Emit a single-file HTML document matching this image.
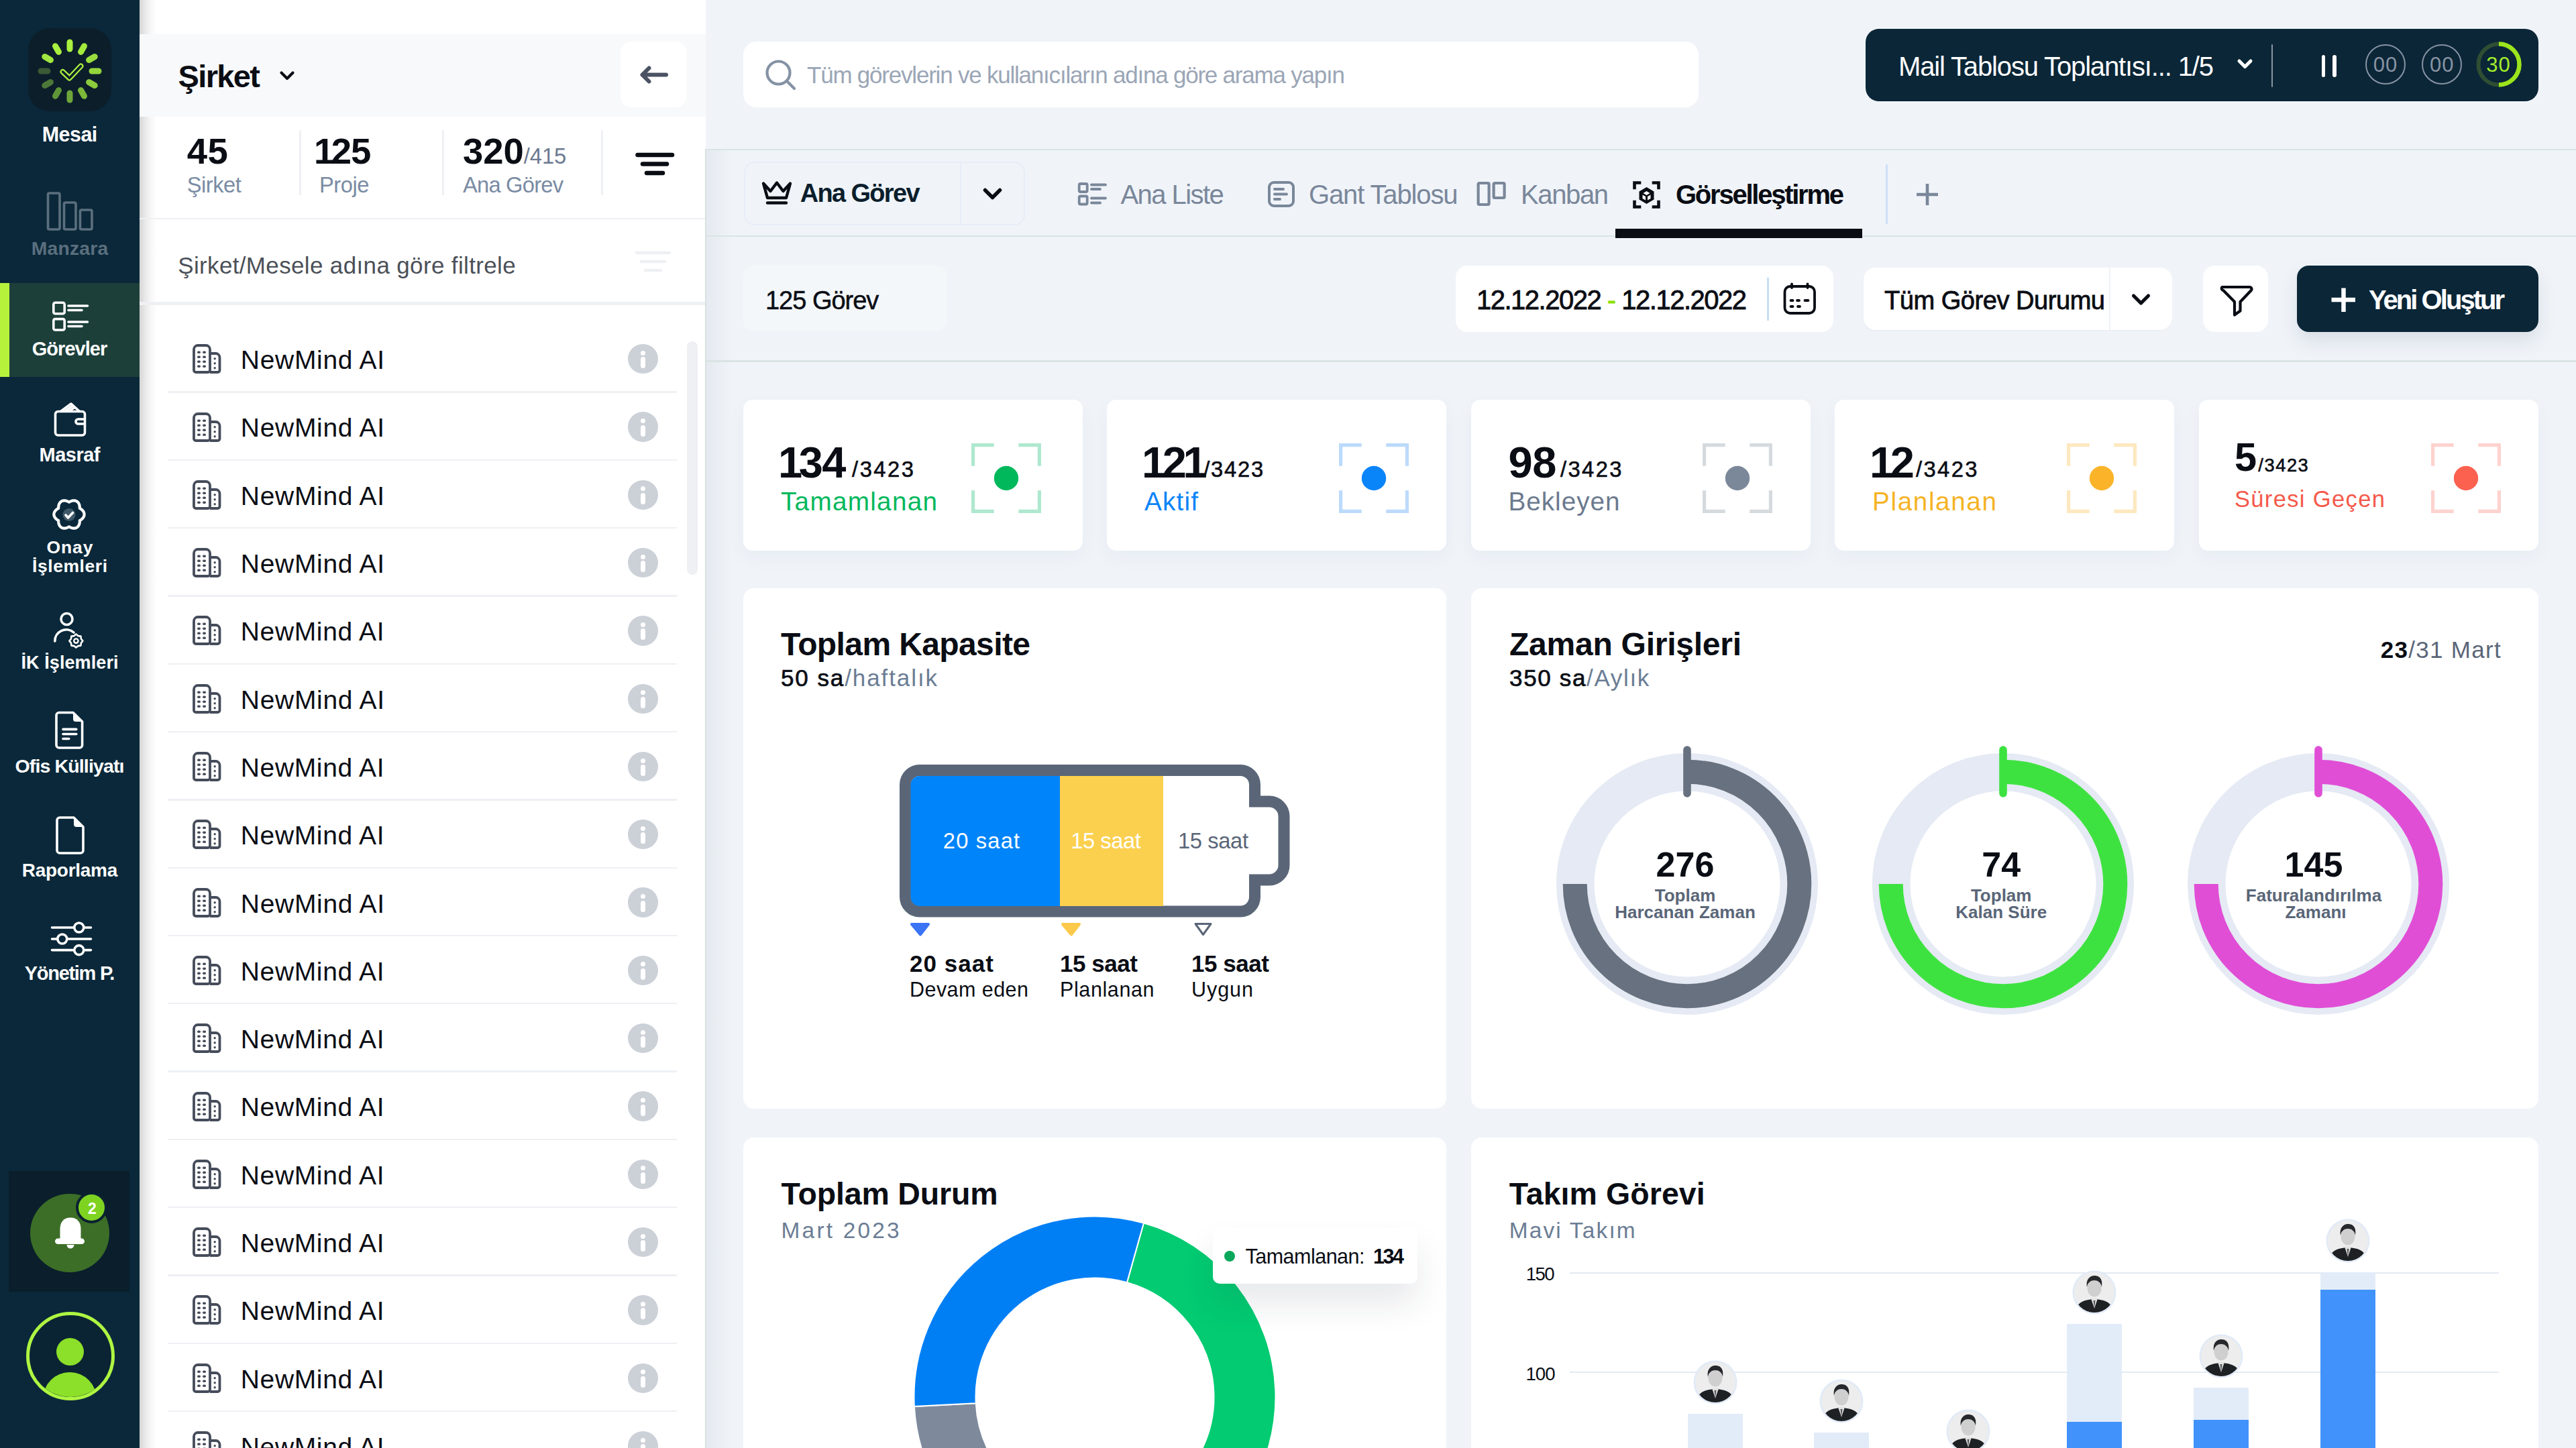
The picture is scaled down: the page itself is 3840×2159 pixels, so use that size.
<!DOCTYPE html><html><head><meta charset="utf-8"><title>Dashboard</title><style>html,body{margin:0;padding:0;}body{width:3840px;height:2159px;overflow:hidden;position:relative;background:#f0f4f9;font-family:"Liberation Sans",sans-serif;}.a{position:absolute;}.t{position:absolute;line-height:1;white-space:nowrap;}</style></head><body><div class="a" style="left:0.00px;top:0.00px;width:208.00px;height:2159.00px;background:#0a283a;border-radius:0px;"></div>
<div class="a" style="left:42.00px;top:42.00px;width:124.00px;height:124.00px;background:#0c1e2a;border-radius:32px;"></div>
<svg class="a" style="left:42.00px;top:42.00px;" width="124.00" height="124.00" viewBox="0 0 124.00 124.00"><line x1="62.00" y1="31.00" x2="62.00" y2="21.00" stroke="#a9f03f" stroke-width="9" stroke-linecap="round"/><line x1="78.50" y1="35.42" x2="83.50" y2="26.76" stroke="#a3ea3d" stroke-width="9" stroke-linecap="round"/><line x1="90.58" y1="47.50" x2="99.24" y2="42.50" stroke="#9ade3e" stroke-width="9" stroke-linecap="round"/><line x1="95.00" y1="64.00" x2="105.00" y2="64.00" stroke="#93d63c" stroke-width="9" stroke-linecap="round"/><line x1="90.58" y1="80.50" x2="99.24" y2="85.50" stroke="#8ccb3c" stroke-width="9" stroke-linecap="round"/><line x1="78.50" y1="92.58" x2="83.50" y2="101.24" stroke="#7dba3a" stroke-width="9" stroke-linecap="round"/><line x1="62.00" y1="97.00" x2="62.00" y2="107.00" stroke="#6ea63a" stroke-width="9" stroke-linecap="round"/><line x1="45.50" y1="92.58" x2="40.50" y2="101.24" stroke="#5f9638" stroke-width="9" stroke-linecap="round"/><line x1="33.42" y1="80.50" x2="24.76" y2="85.50" stroke="#4d7838" stroke-width="9" stroke-linecap="round"/><line x1="29.00" y1="64.00" x2="19.00" y2="64.00" stroke="#3a5936" stroke-width="9" stroke-linecap="round"/><line x1="33.42" y1="47.50" x2="24.76" y2="42.50" stroke="#a0e73f" stroke-width="9" stroke-linecap="round"/><line x1="45.50" y1="35.42" x2="40.50" y2="26.76" stroke="#a9f03f" stroke-width="9" stroke-linecap="round"/><polyline points="51.5,65 61.5,74.5 78.5,56.5" fill="none" stroke="#a9f03f" stroke-width="8" stroke-linejoin="round" stroke-linecap="round"/><polyline points="51.5,65 61.5,74.5 78.5,56.5" fill="none" stroke="#0c1e2a" stroke-width="3.6" stroke-linejoin="round" stroke-linecap="round"/></svg>
<div class="t" id="t1" style="top:185.18px;font-size:30.50px;font-weight:700;color:#ffffff;letter-spacing:-0.568px;left:-396.28px;width:1000px;text-align:center;">Mesai</div>
<svg class="a" style="left:60.00px;top:280.00px;" width="90.00" height="70.00" viewBox="0 0 90.00 70.00"><g fill="none" stroke="#5b6f7e" stroke-width="3.6"><rect x="11.5" y="8" width="17.5" height="54" rx="2"/><rect x="35.5" y="22" width="17.5" height="40" rx="2"/><rect x="59.5" y="33" width="17.5" height="29" rx="2"/></g></svg>
<div class="t" id="t2" style="top:355.54px;font-size:28.30px;font-weight:700;color:#5b6f7e;letter-spacing:0.211px;left:-395.89px;width:1000px;text-align:center;">Manzara</div>
<div class="a" style="left:0.00px;top:422.00px;width:208.00px;height:140.00px;background:#1c3f3a;border-radius:0px;"></div>
<div class="a" style="left:0.00px;top:422.00px;width:14.00px;height:140.00px;background:#b6f23c;border-radius:0px;"></div>
<svg class="a" style="left:70.00px;top:440.00px;" width="70.00" height="60.00" viewBox="0 0 70.00 60.00"><g fill="none" stroke="#ffffff" stroke-width="3.6" stroke-linecap="round"><rect x="9.8" y="11.3" width="16.4" height="16.4" rx="2.5"/><rect x="9.8" y="35.6" width="16.4" height="16.4" rx="2.5"/><line x1="32" y1="16" x2="60.5" y2="16"/><line x1="32" y1="22.5" x2="52" y2="22.5"/><line x1="32" y1="40" x2="60.5" y2="40"/><line x1="32" y1="46.5" x2="52" y2="46.5"/></g></svg>
<div class="t" id="t3" style="top:506.45px;font-size:29.00px;font-weight:700;color:#ffffff;letter-spacing:-0.971px;left:-396.49px;width:1000px;text-align:center;">Görevler</div>
<svg class="a" style="left:70.00px;top:590.00px;" width="70.00" height="70.00" viewBox="0 0 70.00 70.00"><g fill="none" stroke="#ffffff" stroke-width="3.6" stroke-linejoin="round"><rect x="12.5" y="23.5" width="44" height="35.5" rx="4"/><path d="M21 23 L36 12 L48 23"/><path d="M27 23 L39 14.5"/><path d="M33 23 L42 17"/><path d="M56.5 35 H46.5 a3.5 3.5 0 0 0 0 7 H56.5"/></g></svg>
<div class="t" id="t4" style="top:664.45px;font-size:29.00px;font-weight:700;color:#ffffff;letter-spacing:-0.500px;left:-396.25px;width:1000px;text-align:center;">Masraf</div>
<svg class="a" style="left:68.30px;top:733.50px;" width="70.00" height="66.00" viewBox="0 0 70.00 66.00"><path d="M35.00 14.70 L35.65 14.35 L36.33 13.98 L37.04 13.63 L37.77 13.30 L38.53 13.00 L39.30 12.76 L40.10 12.56 L40.90 12.43 L41.71 12.36 L42.51 12.35 L43.31 12.42 L44.10 12.56 L44.86 12.78 L45.60 13.07 L46.30 13.43 L46.96 13.86 L47.58 14.35 L48.15 14.90 L48.66 15.51 L49.12 16.17 L49.52 16.87 L49.87 17.60 L50.15 18.37 L50.38 19.15 L50.56 19.95 L50.68 20.75 L50.76 21.55 L50.80 22.34 L50.82 23.11 L50.85 23.85 L51.47 24.24 L52.13 24.64 L52.80 25.08 L53.45 25.55 L54.08 26.05 L54.68 26.60 L55.25 27.19 L55.77 27.82 L56.23 28.49 L56.64 29.18 L56.98 29.91 L57.25 30.66 L57.44 31.43 L57.56 32.21 L57.60 33.00 L57.56 33.79 L57.44 34.57 L57.25 35.34 L56.98 36.09 L56.64 36.82 L56.23 37.51 L55.77 38.18 L55.25 38.81 L54.68 39.40 L54.08 39.95 L53.45 40.45 L52.80 40.92 L52.13 41.36 L51.47 41.76 L50.85 42.15 L50.82 42.89 L50.80 43.66 L50.76 44.45 L50.68 45.25 L50.56 46.05 L50.38 46.85 L50.15 47.63 L49.87 48.40 L49.52 49.13 L49.12 49.83 L48.66 50.49 L48.15 51.10 L47.58 51.65 L46.96 52.14 L46.30 52.57 L45.60 52.93 L44.86 53.22 L44.10 53.44 L43.31 53.58 L42.51 53.65 L41.71 53.64 L40.90 53.57 L40.10 53.44 L39.30 53.24 L38.53 53.00 L37.77 52.70 L37.04 52.37 L36.33 52.02 L35.65 51.65 L35.00 51.30 L34.35 51.65 L33.67 52.02 L32.96 52.37 L32.23 52.70 L31.47 53.00 L30.70 53.24 L29.90 53.44 L29.10 53.57 L28.29 53.64 L27.49 53.65 L26.69 53.58 L25.90 53.44 L25.14 53.22 L24.40 52.93 L23.70 52.57 L23.04 52.14 L22.42 51.65 L21.85 51.10 L21.34 50.49 L20.88 49.83 L20.48 49.13 L20.13 48.40 L19.85 47.63 L19.62 46.85 L19.44 46.05 L19.32 45.25 L19.24 44.45 L19.20 43.66 L19.18 42.89 L19.15 42.15 L18.53 41.76 L17.87 41.36 L17.20 40.92 L16.55 40.45 L15.92 39.95 L15.32 39.40 L14.75 38.81 L14.23 38.18 L13.77 37.51 L13.36 36.82 L13.02 36.09 L12.75 35.34 L12.56 34.57 L12.44 33.79 L12.40 33.00 L12.44 32.21 L12.56 31.43 L12.75 30.66 L13.02 29.91 L13.36 29.18 L13.77 28.49 L14.23 27.82 L14.75 27.19 L15.32 26.60 L15.92 26.05 L16.55 25.55 L17.20 25.08 L17.87 24.64 L18.53 24.24 L19.15 23.85 L19.18 23.11 L19.20 22.34 L19.24 21.55 L19.32 20.75 L19.44 19.95 L19.62 19.15 L19.85 18.37 L20.13 17.60 L20.48 16.87 L20.88 16.17 L21.34 15.51 L21.85 14.90 L22.42 14.35 L23.04 13.86 L23.70 13.43 L24.40 13.07 L25.14 12.78 L25.90 12.56 L26.69 12.42 L27.49 12.35 L28.29 12.36 L29.10 12.43 L29.90 12.56 L30.70 12.76 L31.47 13.00 L32.23 13.30 L32.96 13.63 L33.67 13.98 L34.35 14.35 Z" fill="none" stroke="#ffffff" stroke-width="4.2" stroke-linejoin="round"/><circle cx="35" cy="33.5" r="9.5" fill="#3f5868"/><polyline points="30,34 33.5,38 40.5,30.5" fill="none" stroke="#ffffff" stroke-width="3.6" stroke-linecap="round" stroke-linejoin="round"/></svg>
<div class="t" id="t5" style="top:802.96px;font-size:26.50px;font-weight:700;color:#ffffff;letter-spacing:0.906px;left:-395.55px;width:1000px;text-align:center;">Onay</div>
<div class="t" id="t6" style="top:831.16px;font-size:26.50px;font-weight:700;color:#ffffff;letter-spacing:0.556px;left:-395.72px;width:1000px;text-align:center;">İşlemleri</div>
<svg class="a" style="left:70.00px;top:905.00px;" width="70.00" height="66.00" viewBox="0 0 70.00 66.00"><g fill="none" stroke="#ffffff" stroke-width="3.6" stroke-linecap="round"><circle cx="29.5" cy="18" r="8.5"/><path d="M11.8 51 A 17 17 0 0 1 40 38"/></g><g transform="translate(43.4 50.6)"><path d="M0 -10 L3 -7.5 L7 -7 L7.5 -3 L10 0 L7.5 3 L7 7 L3 7.5 L0 10 L-3 7.5 L-7 7 L-7.5 3 L-10 0 L-7.5 -3 L-7 -7 L-3 -7.5 Z" fill="#0a283a" stroke="#ffffff" stroke-width="2.6" stroke-linejoin="round"/><circle r="3.2" fill="none" stroke="#ffffff" stroke-width="2.4"/></g></svg>
<div class="t" id="t7" style="top:975.44px;font-size:27.00px;font-weight:700;color:#ffffff;letter-spacing:0.083px;left:-395.96px;width:1000px;text-align:center;">İK İşlemleri</div>
<svg class="a" style="left:70.00px;top:1055.00px;" width="70.00" height="70.00" viewBox="0 0 70.00 70.00"><g fill="none" stroke="#ffffff" stroke-width="3.6" stroke-linejoin="round" stroke-linecap="round"><path d="M18 7.5 H39 L52.6 21 V56 a4 4 0 0 1 -4 4 H18 a4 4 0 0 1 -4 -4 V11.5 a4 4 0 0 1 4 -4 Z"/><line x1="24" y1="32.4" x2="43.8" y2="32.4"/><line x1="24" y1="39.5" x2="43.8" y2="39.5"/><line x1="24" y1="46.5" x2="32.8" y2="46.5"/></g><path d="M39 7.5 L52.6 21 H43 a4 4 0 0 1 -4 -4 Z" fill="#ffffff"/></svg>
<div class="t" id="t8" style="top:1128.47px;font-size:28.50px;font-weight:700;color:#ffffff;letter-spacing:-0.862px;left:-396.43px;width:1000px;text-align:center;">Ofis Külliyatı</div>
<svg class="a" style="left:70.00px;top:1210.00px;" width="70.00" height="70.00" viewBox="0 0 70.00 70.00"><g fill="none" stroke="#ffffff" stroke-width="3.6" stroke-linejoin="round"><path d="M19 9 H40 L54 23 V58 a4 4 0 0 1 -4 4 H19 a4 4 0 0 1 -4 -4 V13 a4 4 0 0 1 4 -4 Z"/></g><path d="M40 9 L54 23 H44 a4 4 0 0 1 -4 -4 Z" fill="#ffffff"/></svg>
<div class="t" id="t9" style="top:1283.89px;font-size:28.00px;font-weight:700;color:#ffffff;letter-spacing:-0.279px;left:-396.14px;width:1000px;text-align:center;">Raporlama</div>
<svg class="a" style="left:70.00px;top:1365.00px;" width="70.00" height="70.00" viewBox="0 0 70.00 70.00"><g fill="none" stroke="#ffffff" stroke-width="3.6" stroke-linecap="round"><line x1="7.5" y1="18" x2="65.5" y2="18"/><line x1="7.5" y1="35" x2="65.5" y2="35"/><line x1="7.5" y1="51.6" x2="65.5" y2="51.6"/></g><g fill="#0a283a" stroke="#ffffff" stroke-width="3.6"><circle cx="47.8" cy="18" r="7"/><circle cx="22.8" cy="35" r="7"/><circle cx="47.8" cy="51.6" r="7"/></g></svg>
<div class="t" id="t10" style="top:1437.45px;font-size:29.00px;font-weight:700;color:#ffffff;letter-spacing:-1.291px;left:-396.65px;width:1000px;text-align:center;">Yönetim P.</div>
<div class="a" style="left:13.00px;top:1746.00px;width:180.00px;height:180.00px;background:#0a1e2b;border-radius:0px;"></div>
<div class="a" style="left:45.3px;top:1779.9px;width:117.4px;height:117.4px;border-radius:50%;background:#3c6e27"></div>
<svg class="a" style="left:70.00px;top:1805.00px;" width="70.00" height="70.00" viewBox="0 0 70.00 70.00"><path d="M35 10.5 C24.5 10.5 19.5 18 19.5 27 V43 H50.5 V27 C50.5 18 45.5 10.5 35 10.5 Z" fill="#ffffff"/><rect x="12" y="41.5" width="44" height="8.5" rx="4.25" fill="#ffffff"/><path d="M29.5 51 h11 a5.5 5.5 0 0 1 -11 0 Z" fill="#ffffff"/></svg>
<div class="a" style="left:113.3px;top:1776.5px;width:39px;height:39px;border-radius:50%;background:#7ed321;border:4.5px solid #0b2131;box-sizing:content-box"></div>
<div class="t" id="t11" style="top:1790.53px;font-size:23.00px;font-weight:700;color:#ffffff;left:-362.70px;width:1000px;text-align:center;">2</div>
<div class="a" style="left:39.3px;top:1956.4px;width:132px;height:132px;border-radius:50%;box-sizing:border-box;border:5.8px solid #aef542;background:#0b2433;overflow:hidden"><div style="position:absolute;left:39.4px;top:33.3px;width:41.2px;height:41.2px;border-radius:50%;background:#8ce02a"></div><div style="position:absolute;left:20px;top:85px;width:80px;height:80px;border-radius:50%;background:#8ce02a"></div></div>
<div class="a" style="left:208.00px;top:0.00px;width:844.00px;height:2159.00px;background:#ffffff;border-radius:0px;"></div>
<div class="a" style="left:208px;top:0;width:26px;height:2159px;background:linear-gradient(90deg,rgba(0,0,0,0.17),rgba(0,0,0,0.09) 30%,rgba(0,0,0,0.03) 65%,rgba(0,0,0,0))"></div>
<div class="a" style="left:208.00px;top:51.00px;width:844.00px;height:123.00px;background:#f8f9fb;border-radius:0px;"></div>
<div class="t" id="t12" style="top:90.21px;font-size:47.00px;font-weight:700;color:#0a0d14;letter-spacing:-1.628px;left:265.50px;">Şirket</div>
<svg class="a" style="left:412.00px;top:100.00px;" width="36.00" height="30.00" viewBox="0 0 36.00 30.00"><polyline points="7.5,8.5 16,17 24.5,8.5" fill="none" stroke="#0a0d14" stroke-width="4.2" stroke-linecap="round" stroke-linejoin="round"/></svg>
<div class="a" style="left:925.00px;top:62.00px;width:98.00px;height:98.00px;background:#ffffff;border-radius:16px;"></div>
<svg class="a" style="left:950.00px;top:90.00px;" width="50.00" height="40.00" viewBox="0 0 50.00 40.00"><g fill="none" stroke="#4a5263" stroke-width="6" stroke-linecap="round" stroke-linejoin="round"><line x1="8" y1="21.5" x2="43" y2="21.5"/><polyline points="17.5,11.5 7.5,21.5 17.5,31.5"/></g></svg>
<div class="t" id="t13" style="top:198.85px;font-size:54.50px;font-weight:700;color:#0a0d14;letter-spacing:0.375px;left:278.80px;">45</div>
<div class="t" id="t14" style="top:259.81px;font-size:32.70px;font-weight:400;color:#7a8ba3;letter-spacing:-0.511px;left:278.80px;">Şirket</div>
<div class="a" style="left:446.00px;top:194.00px;width:3.00px;height:97.00px;background:#eef0f4;border-radius:0px;"></div>
<div class="t" id="t15" style="top:198.85px;font-size:54.50px;font-weight:700;color:#0a0d14;left:471.50px;letter-spacing:-1px;"><span style="margin:0 -3.5px">1</span>25</div>
<div class="t" id="t16" style="top:259.81px;font-size:32.70px;font-weight:400;color:#7a8ba3;letter-spacing:-0.453px;left:476.00px;">Proje</div>
<div class="a" style="left:659.00px;top:194.00px;width:3.00px;height:97.00px;background:#eef0f4;border-radius:0px;"></div>
<div class="t" id="t17" style="top:198.85px;font-size:54.50px;font-weight:700;color:#0a0d14;letter-spacing:-0.047px;left:690.00px;">320<span style="font-size:32.7px;font-weight:400;color:#6b7a90">/415</span></div>
<div class="t" id="t18" style="top:259.81px;font-size:32.70px;font-weight:400;color:#7a8ba3;letter-spacing:-0.783px;left:690.00px;">Ana Görev</div>
<div class="a" style="left:895.50px;top:194.00px;width:3.00px;height:97.00px;background:#eef0f4;border-radius:0px;"></div>
<svg class="a" style="left:940.00px;top:220.00px;" width="70.00" height="50.00" viewBox="0 0 70.00 50.00"><g stroke="#0a0d14" stroke-width="6.5" stroke-linecap="round"><line x1="10.5" y1="11" x2="62" y2="11"/><line x1="18" y1="24.5" x2="54" y2="24.5"/><line x1="24" y1="38" x2="48" y2="38"/></g></svg>
<div class="a" style="left:208.00px;top:324.50px;width:844.00px;height:2.50px;background:#eef0f4;border-radius:0px;"></div>
<div class="t" id="t19" style="top:377.87px;font-size:35.00px;font-weight:400;color:#4b5058;letter-spacing:0.353px;left:265.20px;">Şirket/Mesele adına göre filtrele</div>
<svg class="a" style="left:940.00px;top:370.00px;" width="70.00" height="50.00" viewBox="0 0 70.00 50.00"><g stroke="#eef0f3" stroke-width="4.5" stroke-linecap="round"><line x1="9" y1="7" x2="58" y2="7"/><line x1="16" y1="20" x2="51" y2="20"/><line x1="22" y1="33" x2="45" y2="33"/></g></svg>
<div class="a" style="left:208.00px;top:449.50px;width:844.00px;height:5.00px;background:#eef0f4;border-radius:0px;"></div>
<svg class="a" style="left:283.00px;top:512.20px;" width="48.00" height="48.00" viewBox="0 0 48.00 48.00"><g fill="none" stroke="#454c5a" stroke-width="3.8" stroke-linejoin="round"><path d="M6 40 V9 a6 6 0 0 1 6 -6 H24 a6 6 0 0 1 6 6 V40 a3 3 0 0 1 -3 3 H9 a3 3 0 0 1 -3 -3 Z"/><path d="M30 15 H38.5 a6 6 0 0 1 6 6 V40 a3 3 0 0 1 -3 3 H30"/></g><g fill="#454c5a"><rect x="11.0" y="11.5" width="5" height="3.4" rx="1.7"/><rect x="19.0" y="11.5" width="5" height="3.4" rx="1.7"/><rect x="11.0" y="18.5" width="5" height="3.4" rx="1.7"/><rect x="19.0" y="18.5" width="5" height="3.4" rx="1.7"/><rect x="11.0" y="25.5" width="5" height="3.4" rx="1.7"/><rect x="19.0" y="25.5" width="5" height="3.4" rx="1.7"/><rect x="11.0" y="32.5" width="5" height="3.4" rx="1.7"/><rect x="19.0" y="32.5" width="5" height="3.4" rx="1.7"/><rect x="35.5" y="21.0" width="3.4" height="3.4" rx="1.7"/><rect x="35.5" y="28.0" width="3.4" height="3.4" rx="1.7"/><rect x="35.5" y="35.0" width="3.4" height="3.4" rx="1.7"/></g></svg>
<div class="t" id="t20" style="top:517.18px;font-size:39.00px;font-weight:400;color:#0a0d14;letter-spacing:0.690px;left:358.80px;">NewMind AI</div>
<div class="a" style="left:936.4px;top:513.00px;width:44.4px;height:44.4px;border-radius:50%;background:#ccd1d8"></div>
<div class="a" style="left:955.20px;top:522.70px;width:7.00px;height:7.00px;background:#ffffff;border-radius:4px;"></div>
<div class="a" style="left:955.20px;top:532.20px;width:7.00px;height:17.00px;background:#ffffff;border-radius:3.5px;"></div>
<div class="a" style="left:250.00px;top:583.40px;width:759.00px;height:2.40px;background:#eef0f4;border-radius:0px;"></div>
<svg class="a" style="left:283.00px;top:613.50px;" width="48.00" height="48.00" viewBox="0 0 48.00 48.00"><g fill="none" stroke="#454c5a" stroke-width="3.8" stroke-linejoin="round"><path d="M6 40 V9 a6 6 0 0 1 6 -6 H24 a6 6 0 0 1 6 6 V40 a3 3 0 0 1 -3 3 H9 a3 3 0 0 1 -3 -3 Z"/><path d="M30 15 H38.5 a6 6 0 0 1 6 6 V40 a3 3 0 0 1 -3 3 H30"/></g><g fill="#454c5a"><rect x="11.0" y="11.5" width="5" height="3.4" rx="1.7"/><rect x="19.0" y="11.5" width="5" height="3.4" rx="1.7"/><rect x="11.0" y="18.5" width="5" height="3.4" rx="1.7"/><rect x="19.0" y="18.5" width="5" height="3.4" rx="1.7"/><rect x="11.0" y="25.5" width="5" height="3.4" rx="1.7"/><rect x="19.0" y="25.5" width="5" height="3.4" rx="1.7"/><rect x="11.0" y="32.5" width="5" height="3.4" rx="1.7"/><rect x="19.0" y="32.5" width="5" height="3.4" rx="1.7"/><rect x="35.5" y="21.0" width="3.4" height="3.4" rx="1.7"/><rect x="35.5" y="28.0" width="3.4" height="3.4" rx="1.7"/><rect x="35.5" y="35.0" width="3.4" height="3.4" rx="1.7"/></g></svg>
<div class="t" id="t21" style="top:618.48px;font-size:39.00px;font-weight:400;color:#0a0d14;letter-spacing:0.690px;left:358.80px;">NewMind AI</div>
<div class="a" style="left:936.4px;top:614.30px;width:44.4px;height:44.4px;border-radius:50%;background:#ccd1d8"></div>
<div class="a" style="left:955.20px;top:624.00px;width:7.00px;height:7.00px;background:#ffffff;border-radius:4px;"></div>
<div class="a" style="left:955.20px;top:633.50px;width:7.00px;height:17.00px;background:#ffffff;border-radius:3.5px;"></div>
<div class="a" style="left:250.00px;top:684.70px;width:759.00px;height:2.40px;background:#eef0f4;border-radius:0px;"></div>
<svg class="a" style="left:283.00px;top:714.80px;" width="48.00" height="48.00" viewBox="0 0 48.00 48.00"><g fill="none" stroke="#454c5a" stroke-width="3.8" stroke-linejoin="round"><path d="M6 40 V9 a6 6 0 0 1 6 -6 H24 a6 6 0 0 1 6 6 V40 a3 3 0 0 1 -3 3 H9 a3 3 0 0 1 -3 -3 Z"/><path d="M30 15 H38.5 a6 6 0 0 1 6 6 V40 a3 3 0 0 1 -3 3 H30"/></g><g fill="#454c5a"><rect x="11.0" y="11.5" width="5" height="3.4" rx="1.7"/><rect x="19.0" y="11.5" width="5" height="3.4" rx="1.7"/><rect x="11.0" y="18.5" width="5" height="3.4" rx="1.7"/><rect x="19.0" y="18.5" width="5" height="3.4" rx="1.7"/><rect x="11.0" y="25.5" width="5" height="3.4" rx="1.7"/><rect x="19.0" y="25.5" width="5" height="3.4" rx="1.7"/><rect x="11.0" y="32.5" width="5" height="3.4" rx="1.7"/><rect x="19.0" y="32.5" width="5" height="3.4" rx="1.7"/><rect x="35.5" y="21.0" width="3.4" height="3.4" rx="1.7"/><rect x="35.5" y="28.0" width="3.4" height="3.4" rx="1.7"/><rect x="35.5" y="35.0" width="3.4" height="3.4" rx="1.7"/></g></svg>
<div class="t" id="t22" style="top:719.78px;font-size:39.00px;font-weight:400;color:#0a0d14;letter-spacing:0.690px;left:358.80px;">NewMind AI</div>
<div class="a" style="left:936.4px;top:715.60px;width:44.4px;height:44.4px;border-radius:50%;background:#ccd1d8"></div>
<div class="a" style="left:955.20px;top:725.30px;width:7.00px;height:7.00px;background:#ffffff;border-radius:4px;"></div>
<div class="a" style="left:955.20px;top:734.80px;width:7.00px;height:17.00px;background:#ffffff;border-radius:3.5px;"></div>
<div class="a" style="left:250.00px;top:786.00px;width:759.00px;height:2.40px;background:#eef0f4;border-radius:0px;"></div>
<svg class="a" style="left:283.00px;top:816.10px;" width="48.00" height="48.00" viewBox="0 0 48.00 48.00"><g fill="none" stroke="#454c5a" stroke-width="3.8" stroke-linejoin="round"><path d="M6 40 V9 a6 6 0 0 1 6 -6 H24 a6 6 0 0 1 6 6 V40 a3 3 0 0 1 -3 3 H9 a3 3 0 0 1 -3 -3 Z"/><path d="M30 15 H38.5 a6 6 0 0 1 6 6 V40 a3 3 0 0 1 -3 3 H30"/></g><g fill="#454c5a"><rect x="11.0" y="11.5" width="5" height="3.4" rx="1.7"/><rect x="19.0" y="11.5" width="5" height="3.4" rx="1.7"/><rect x="11.0" y="18.5" width="5" height="3.4" rx="1.7"/><rect x="19.0" y="18.5" width="5" height="3.4" rx="1.7"/><rect x="11.0" y="25.5" width="5" height="3.4" rx="1.7"/><rect x="19.0" y="25.5" width="5" height="3.4" rx="1.7"/><rect x="11.0" y="32.5" width="5" height="3.4" rx="1.7"/><rect x="19.0" y="32.5" width="5" height="3.4" rx="1.7"/><rect x="35.5" y="21.0" width="3.4" height="3.4" rx="1.7"/><rect x="35.5" y="28.0" width="3.4" height="3.4" rx="1.7"/><rect x="35.5" y="35.0" width="3.4" height="3.4" rx="1.7"/></g></svg>
<div class="t" id="t23" style="top:821.08px;font-size:39.00px;font-weight:400;color:#0a0d14;letter-spacing:0.690px;left:358.80px;">NewMind AI</div>
<div class="a" style="left:936.4px;top:816.90px;width:44.4px;height:44.4px;border-radius:50%;background:#ccd1d8"></div>
<div class="a" style="left:955.20px;top:826.60px;width:7.00px;height:7.00px;background:#ffffff;border-radius:4px;"></div>
<div class="a" style="left:955.20px;top:836.10px;width:7.00px;height:17.00px;background:#ffffff;border-radius:3.5px;"></div>
<div class="a" style="left:250.00px;top:887.30px;width:759.00px;height:2.40px;background:#eef0f4;border-radius:0px;"></div>
<svg class="a" style="left:283.00px;top:917.40px;" width="48.00" height="48.00" viewBox="0 0 48.00 48.00"><g fill="none" stroke="#454c5a" stroke-width="3.8" stroke-linejoin="round"><path d="M6 40 V9 a6 6 0 0 1 6 -6 H24 a6 6 0 0 1 6 6 V40 a3 3 0 0 1 -3 3 H9 a3 3 0 0 1 -3 -3 Z"/><path d="M30 15 H38.5 a6 6 0 0 1 6 6 V40 a3 3 0 0 1 -3 3 H30"/></g><g fill="#454c5a"><rect x="11.0" y="11.5" width="5" height="3.4" rx="1.7"/><rect x="19.0" y="11.5" width="5" height="3.4" rx="1.7"/><rect x="11.0" y="18.5" width="5" height="3.4" rx="1.7"/><rect x="19.0" y="18.5" width="5" height="3.4" rx="1.7"/><rect x="11.0" y="25.5" width="5" height="3.4" rx="1.7"/><rect x="19.0" y="25.5" width="5" height="3.4" rx="1.7"/><rect x="11.0" y="32.5" width="5" height="3.4" rx="1.7"/><rect x="19.0" y="32.5" width="5" height="3.4" rx="1.7"/><rect x="35.5" y="21.0" width="3.4" height="3.4" rx="1.7"/><rect x="35.5" y="28.0" width="3.4" height="3.4" rx="1.7"/><rect x="35.5" y="35.0" width="3.4" height="3.4" rx="1.7"/></g></svg>
<div class="t" id="t24" style="top:922.38px;font-size:39.00px;font-weight:400;color:#0a0d14;letter-spacing:0.633px;left:358.80px;">NewMind AI</div>
<div class="a" style="left:936.4px;top:918.20px;width:44.4px;height:44.4px;border-radius:50%;background:#ccd1d8"></div>
<div class="a" style="left:955.20px;top:927.90px;width:7.00px;height:7.00px;background:#ffffff;border-radius:4px;"></div>
<div class="a" style="left:955.20px;top:937.40px;width:7.00px;height:17.00px;background:#ffffff;border-radius:3.5px;"></div>
<div class="a" style="left:250.00px;top:988.60px;width:759.00px;height:2.40px;background:#eef0f4;border-radius:0px;"></div>
<svg class="a" style="left:283.00px;top:1018.70px;" width="48.00" height="48.00" viewBox="0 0 48.00 48.00"><g fill="none" stroke="#454c5a" stroke-width="3.8" stroke-linejoin="round"><path d="M6 40 V9 a6 6 0 0 1 6 -6 H24 a6 6 0 0 1 6 6 V40 a3 3 0 0 1 -3 3 H9 a3 3 0 0 1 -3 -3 Z"/><path d="M30 15 H38.5 a6 6 0 0 1 6 6 V40 a3 3 0 0 1 -3 3 H30"/></g><g fill="#454c5a"><rect x="11.0" y="11.5" width="5" height="3.4" rx="1.7"/><rect x="19.0" y="11.5" width="5" height="3.4" rx="1.7"/><rect x="11.0" y="18.5" width="5" height="3.4" rx="1.7"/><rect x="19.0" y="18.5" width="5" height="3.4" rx="1.7"/><rect x="11.0" y="25.5" width="5" height="3.4" rx="1.7"/><rect x="19.0" y="25.5" width="5" height="3.4" rx="1.7"/><rect x="11.0" y="32.5" width="5" height="3.4" rx="1.7"/><rect x="19.0" y="32.5" width="5" height="3.4" rx="1.7"/><rect x="35.5" y="21.0" width="3.4" height="3.4" rx="1.7"/><rect x="35.5" y="28.0" width="3.4" height="3.4" rx="1.7"/><rect x="35.5" y="35.0" width="3.4" height="3.4" rx="1.7"/></g></svg>
<div class="t" id="t25" style="top:1023.68px;font-size:39.00px;font-weight:400;color:#0a0d14;letter-spacing:0.690px;left:358.80px;">NewMind AI</div>
<div class="a" style="left:936.4px;top:1019.50px;width:44.4px;height:44.4px;border-radius:50%;background:#ccd1d8"></div>
<div class="a" style="left:955.20px;top:1029.20px;width:7.00px;height:7.00px;background:#ffffff;border-radius:4px;"></div>
<div class="a" style="left:955.20px;top:1038.70px;width:7.00px;height:17.00px;background:#ffffff;border-radius:3.5px;"></div>
<div class="a" style="left:250.00px;top:1089.90px;width:759.00px;height:2.40px;background:#eef0f4;border-radius:0px;"></div>
<svg class="a" style="left:283.00px;top:1120.00px;" width="48.00" height="48.00" viewBox="0 0 48.00 48.00"><g fill="none" stroke="#454c5a" stroke-width="3.8" stroke-linejoin="round"><path d="M6 40 V9 a6 6 0 0 1 6 -6 H24 a6 6 0 0 1 6 6 V40 a3 3 0 0 1 -3 3 H9 a3 3 0 0 1 -3 -3 Z"/><path d="M30 15 H38.5 a6 6 0 0 1 6 6 V40 a3 3 0 0 1 -3 3 H30"/></g><g fill="#454c5a"><rect x="11.0" y="11.5" width="5" height="3.4" rx="1.7"/><rect x="19.0" y="11.5" width="5" height="3.4" rx="1.7"/><rect x="11.0" y="18.5" width="5" height="3.4" rx="1.7"/><rect x="19.0" y="18.5" width="5" height="3.4" rx="1.7"/><rect x="11.0" y="25.5" width="5" height="3.4" rx="1.7"/><rect x="19.0" y="25.5" width="5" height="3.4" rx="1.7"/><rect x="11.0" y="32.5" width="5" height="3.4" rx="1.7"/><rect x="19.0" y="32.5" width="5" height="3.4" rx="1.7"/><rect x="35.5" y="21.0" width="3.4" height="3.4" rx="1.7"/><rect x="35.5" y="28.0" width="3.4" height="3.4" rx="1.7"/><rect x="35.5" y="35.0" width="3.4" height="3.4" rx="1.7"/></g></svg>
<div class="t" id="t26" style="top:1124.98px;font-size:39.00px;font-weight:400;color:#0a0d14;letter-spacing:0.633px;left:358.80px;">NewMind AI</div>
<div class="a" style="left:936.4px;top:1120.80px;width:44.4px;height:44.4px;border-radius:50%;background:#ccd1d8"></div>
<div class="a" style="left:955.20px;top:1130.50px;width:7.00px;height:7.00px;background:#ffffff;border-radius:4px;"></div>
<div class="a" style="left:955.20px;top:1140.00px;width:7.00px;height:17.00px;background:#ffffff;border-radius:3.5px;"></div>
<div class="a" style="left:250.00px;top:1191.20px;width:759.00px;height:2.40px;background:#eef0f4;border-radius:0px;"></div>
<svg class="a" style="left:283.00px;top:1221.30px;" width="48.00" height="48.00" viewBox="0 0 48.00 48.00"><g fill="none" stroke="#454c5a" stroke-width="3.8" stroke-linejoin="round"><path d="M6 40 V9 a6 6 0 0 1 6 -6 H24 a6 6 0 0 1 6 6 V40 a3 3 0 0 1 -3 3 H9 a3 3 0 0 1 -3 -3 Z"/><path d="M30 15 H38.5 a6 6 0 0 1 6 6 V40 a3 3 0 0 1 -3 3 H30"/></g><g fill="#454c5a"><rect x="11.0" y="11.5" width="5" height="3.4" rx="1.7"/><rect x="19.0" y="11.5" width="5" height="3.4" rx="1.7"/><rect x="11.0" y="18.5" width="5" height="3.4" rx="1.7"/><rect x="19.0" y="18.5" width="5" height="3.4" rx="1.7"/><rect x="11.0" y="25.5" width="5" height="3.4" rx="1.7"/><rect x="19.0" y="25.5" width="5" height="3.4" rx="1.7"/><rect x="11.0" y="32.5" width="5" height="3.4" rx="1.7"/><rect x="19.0" y="32.5" width="5" height="3.4" rx="1.7"/><rect x="35.5" y="21.0" width="3.4" height="3.4" rx="1.7"/><rect x="35.5" y="28.0" width="3.4" height="3.4" rx="1.7"/><rect x="35.5" y="35.0" width="3.4" height="3.4" rx="1.7"/></g></svg>
<div class="t" id="t27" style="top:1226.28px;font-size:39.00px;font-weight:400;color:#0a0d14;letter-spacing:0.633px;left:358.80px;">NewMind AI</div>
<div class="a" style="left:936.4px;top:1222.10px;width:44.4px;height:44.4px;border-radius:50%;background:#ccd1d8"></div>
<div class="a" style="left:955.20px;top:1231.80px;width:7.00px;height:7.00px;background:#ffffff;border-radius:4px;"></div>
<div class="a" style="left:955.20px;top:1241.30px;width:7.00px;height:17.00px;background:#ffffff;border-radius:3.5px;"></div>
<div class="a" style="left:250.00px;top:1292.50px;width:759.00px;height:2.40px;background:#eef0f4;border-radius:0px;"></div>
<svg class="a" style="left:283.00px;top:1322.60px;" width="48.00" height="48.00" viewBox="0 0 48.00 48.00"><g fill="none" stroke="#454c5a" stroke-width="3.8" stroke-linejoin="round"><path d="M6 40 V9 a6 6 0 0 1 6 -6 H24 a6 6 0 0 1 6 6 V40 a3 3 0 0 1 -3 3 H9 a3 3 0 0 1 -3 -3 Z"/><path d="M30 15 H38.5 a6 6 0 0 1 6 6 V40 a3 3 0 0 1 -3 3 H30"/></g><g fill="#454c5a"><rect x="11.0" y="11.5" width="5" height="3.4" rx="1.7"/><rect x="19.0" y="11.5" width="5" height="3.4" rx="1.7"/><rect x="11.0" y="18.5" width="5" height="3.4" rx="1.7"/><rect x="19.0" y="18.5" width="5" height="3.4" rx="1.7"/><rect x="11.0" y="25.5" width="5" height="3.4" rx="1.7"/><rect x="19.0" y="25.5" width="5" height="3.4" rx="1.7"/><rect x="11.0" y="32.5" width="5" height="3.4" rx="1.7"/><rect x="19.0" y="32.5" width="5" height="3.4" rx="1.7"/><rect x="35.5" y="21.0" width="3.4" height="3.4" rx="1.7"/><rect x="35.5" y="28.0" width="3.4" height="3.4" rx="1.7"/><rect x="35.5" y="35.0" width="3.4" height="3.4" rx="1.7"/></g></svg>
<div class="t" id="t28" style="top:1327.58px;font-size:39.00px;font-weight:400;color:#0a0d14;letter-spacing:0.690px;left:358.80px;">NewMind AI</div>
<div class="a" style="left:936.4px;top:1323.40px;width:44.4px;height:44.4px;border-radius:50%;background:#ccd1d8"></div>
<div class="a" style="left:955.20px;top:1333.10px;width:7.00px;height:7.00px;background:#ffffff;border-radius:4px;"></div>
<div class="a" style="left:955.20px;top:1342.60px;width:7.00px;height:17.00px;background:#ffffff;border-radius:3.5px;"></div>
<div class="a" style="left:250.00px;top:1393.80px;width:759.00px;height:2.40px;background:#eef0f4;border-radius:0px;"></div>
<svg class="a" style="left:283.00px;top:1423.90px;" width="48.00" height="48.00" viewBox="0 0 48.00 48.00"><g fill="none" stroke="#454c5a" stroke-width="3.8" stroke-linejoin="round"><path d="M6 40 V9 a6 6 0 0 1 6 -6 H24 a6 6 0 0 1 6 6 V40 a3 3 0 0 1 -3 3 H9 a3 3 0 0 1 -3 -3 Z"/><path d="M30 15 H38.5 a6 6 0 0 1 6 6 V40 a3 3 0 0 1 -3 3 H30"/></g><g fill="#454c5a"><rect x="11.0" y="11.5" width="5" height="3.4" rx="1.7"/><rect x="19.0" y="11.5" width="5" height="3.4" rx="1.7"/><rect x="11.0" y="18.5" width="5" height="3.4" rx="1.7"/><rect x="19.0" y="18.5" width="5" height="3.4" rx="1.7"/><rect x="11.0" y="25.5" width="5" height="3.4" rx="1.7"/><rect x="19.0" y="25.5" width="5" height="3.4" rx="1.7"/><rect x="11.0" y="32.5" width="5" height="3.4" rx="1.7"/><rect x="19.0" y="32.5" width="5" height="3.4" rx="1.7"/><rect x="35.5" y="21.0" width="3.4" height="3.4" rx="1.7"/><rect x="35.5" y="28.0" width="3.4" height="3.4" rx="1.7"/><rect x="35.5" y="35.0" width="3.4" height="3.4" rx="1.7"/></g></svg>
<div class="t" id="t29" style="top:1428.88px;font-size:39.00px;font-weight:400;color:#0a0d14;letter-spacing:0.633px;left:358.80px;">NewMind AI</div>
<div class="a" style="left:936.4px;top:1424.70px;width:44.4px;height:44.4px;border-radius:50%;background:#ccd1d8"></div>
<div class="a" style="left:955.20px;top:1434.40px;width:7.00px;height:7.00px;background:#ffffff;border-radius:4px;"></div>
<div class="a" style="left:955.20px;top:1443.90px;width:7.00px;height:17.00px;background:#ffffff;border-radius:3.5px;"></div>
<div class="a" style="left:250.00px;top:1495.10px;width:759.00px;height:2.40px;background:#eef0f4;border-radius:0px;"></div>
<svg class="a" style="left:283.00px;top:1525.20px;" width="48.00" height="48.00" viewBox="0 0 48.00 48.00"><g fill="none" stroke="#454c5a" stroke-width="3.8" stroke-linejoin="round"><path d="M6 40 V9 a6 6 0 0 1 6 -6 H24 a6 6 0 0 1 6 6 V40 a3 3 0 0 1 -3 3 H9 a3 3 0 0 1 -3 -3 Z"/><path d="M30 15 H38.5 a6 6 0 0 1 6 6 V40 a3 3 0 0 1 -3 3 H30"/></g><g fill="#454c5a"><rect x="11.0" y="11.5" width="5" height="3.4" rx="1.7"/><rect x="19.0" y="11.5" width="5" height="3.4" rx="1.7"/><rect x="11.0" y="18.5" width="5" height="3.4" rx="1.7"/><rect x="19.0" y="18.5" width="5" height="3.4" rx="1.7"/><rect x="11.0" y="25.5" width="5" height="3.4" rx="1.7"/><rect x="19.0" y="25.5" width="5" height="3.4" rx="1.7"/><rect x="11.0" y="32.5" width="5" height="3.4" rx="1.7"/><rect x="19.0" y="32.5" width="5" height="3.4" rx="1.7"/><rect x="35.5" y="21.0" width="3.4" height="3.4" rx="1.7"/><rect x="35.5" y="28.0" width="3.4" height="3.4" rx="1.7"/><rect x="35.5" y="35.0" width="3.4" height="3.4" rx="1.7"/></g></svg>
<div class="t" id="t30" style="top:1530.18px;font-size:39.00px;font-weight:400;color:#0a0d14;letter-spacing:0.633px;left:358.80px;">NewMind AI</div>
<div class="a" style="left:936.4px;top:1526.00px;width:44.4px;height:44.4px;border-radius:50%;background:#ccd1d8"></div>
<div class="a" style="left:955.20px;top:1535.70px;width:7.00px;height:7.00px;background:#ffffff;border-radius:4px;"></div>
<div class="a" style="left:955.20px;top:1545.20px;width:7.00px;height:17.00px;background:#ffffff;border-radius:3.5px;"></div>
<div class="a" style="left:250.00px;top:1596.40px;width:759.00px;height:2.40px;background:#eef0f4;border-radius:0px;"></div>
<svg class="a" style="left:283.00px;top:1626.50px;" width="48.00" height="48.00" viewBox="0 0 48.00 48.00"><g fill="none" stroke="#454c5a" stroke-width="3.8" stroke-linejoin="round"><path d="M6 40 V9 a6 6 0 0 1 6 -6 H24 a6 6 0 0 1 6 6 V40 a3 3 0 0 1 -3 3 H9 a3 3 0 0 1 -3 -3 Z"/><path d="M30 15 H38.5 a6 6 0 0 1 6 6 V40 a3 3 0 0 1 -3 3 H30"/></g><g fill="#454c5a"><rect x="11.0" y="11.5" width="5" height="3.4" rx="1.7"/><rect x="19.0" y="11.5" width="5" height="3.4" rx="1.7"/><rect x="11.0" y="18.5" width="5" height="3.4" rx="1.7"/><rect x="19.0" y="18.5" width="5" height="3.4" rx="1.7"/><rect x="11.0" y="25.5" width="5" height="3.4" rx="1.7"/><rect x="19.0" y="25.5" width="5" height="3.4" rx="1.7"/><rect x="11.0" y="32.5" width="5" height="3.4" rx="1.7"/><rect x="19.0" y="32.5" width="5" height="3.4" rx="1.7"/><rect x="35.5" y="21.0" width="3.4" height="3.4" rx="1.7"/><rect x="35.5" y="28.0" width="3.4" height="3.4" rx="1.7"/><rect x="35.5" y="35.0" width="3.4" height="3.4" rx="1.7"/></g></svg>
<div class="t" id="t31" style="top:1631.48px;font-size:39.00px;font-weight:400;color:#0a0d14;letter-spacing:0.633px;left:358.80px;">NewMind AI</div>
<div class="a" style="left:936.4px;top:1627.30px;width:44.4px;height:44.4px;border-radius:50%;background:#ccd1d8"></div>
<div class="a" style="left:955.20px;top:1637.00px;width:7.00px;height:7.00px;background:#ffffff;border-radius:4px;"></div>
<div class="a" style="left:955.20px;top:1646.50px;width:7.00px;height:17.00px;background:#ffffff;border-radius:3.5px;"></div>
<div class="a" style="left:250.00px;top:1697.70px;width:759.00px;height:2.40px;background:#eef0f4;border-radius:0px;"></div>
<svg class="a" style="left:283.00px;top:1727.80px;" width="48.00" height="48.00" viewBox="0 0 48.00 48.00"><g fill="none" stroke="#454c5a" stroke-width="3.8" stroke-linejoin="round"><path d="M6 40 V9 a6 6 0 0 1 6 -6 H24 a6 6 0 0 1 6 6 V40 a3 3 0 0 1 -3 3 H9 a3 3 0 0 1 -3 -3 Z"/><path d="M30 15 H38.5 a6 6 0 0 1 6 6 V40 a3 3 0 0 1 -3 3 H30"/></g><g fill="#454c5a"><rect x="11.0" y="11.5" width="5" height="3.4" rx="1.7"/><rect x="19.0" y="11.5" width="5" height="3.4" rx="1.7"/><rect x="11.0" y="18.5" width="5" height="3.4" rx="1.7"/><rect x="19.0" y="18.5" width="5" height="3.4" rx="1.7"/><rect x="11.0" y="25.5" width="5" height="3.4" rx="1.7"/><rect x="19.0" y="25.5" width="5" height="3.4" rx="1.7"/><rect x="11.0" y="32.5" width="5" height="3.4" rx="1.7"/><rect x="19.0" y="32.5" width="5" height="3.4" rx="1.7"/><rect x="35.5" y="21.0" width="3.4" height="3.4" rx="1.7"/><rect x="35.5" y="28.0" width="3.4" height="3.4" rx="1.7"/><rect x="35.5" y="35.0" width="3.4" height="3.4" rx="1.7"/></g></svg>
<div class="t" id="t32" style="top:1732.78px;font-size:39.00px;font-weight:400;color:#0a0d14;letter-spacing:0.633px;left:358.80px;">NewMind AI</div>
<div class="a" style="left:936.4px;top:1728.60px;width:44.4px;height:44.4px;border-radius:50%;background:#ccd1d8"></div>
<div class="a" style="left:955.20px;top:1738.30px;width:7.00px;height:7.00px;background:#ffffff;border-radius:4px;"></div>
<div class="a" style="left:955.20px;top:1747.80px;width:7.00px;height:17.00px;background:#ffffff;border-radius:3.5px;"></div>
<div class="a" style="left:250.00px;top:1799.00px;width:759.00px;height:2.40px;background:#eef0f4;border-radius:0px;"></div>
<svg class="a" style="left:283.00px;top:1829.10px;" width="48.00" height="48.00" viewBox="0 0 48.00 48.00"><g fill="none" stroke="#454c5a" stroke-width="3.8" stroke-linejoin="round"><path d="M6 40 V9 a6 6 0 0 1 6 -6 H24 a6 6 0 0 1 6 6 V40 a3 3 0 0 1 -3 3 H9 a3 3 0 0 1 -3 -3 Z"/><path d="M30 15 H38.5 a6 6 0 0 1 6 6 V40 a3 3 0 0 1 -3 3 H30"/></g><g fill="#454c5a"><rect x="11.0" y="11.5" width="5" height="3.4" rx="1.7"/><rect x="19.0" y="11.5" width="5" height="3.4" rx="1.7"/><rect x="11.0" y="18.5" width="5" height="3.4" rx="1.7"/><rect x="19.0" y="18.5" width="5" height="3.4" rx="1.7"/><rect x="11.0" y="25.5" width="5" height="3.4" rx="1.7"/><rect x="19.0" y="25.5" width="5" height="3.4" rx="1.7"/><rect x="11.0" y="32.5" width="5" height="3.4" rx="1.7"/><rect x="19.0" y="32.5" width="5" height="3.4" rx="1.7"/><rect x="35.5" y="21.0" width="3.4" height="3.4" rx="1.7"/><rect x="35.5" y="28.0" width="3.4" height="3.4" rx="1.7"/><rect x="35.5" y="35.0" width="3.4" height="3.4" rx="1.7"/></g></svg>
<div class="t" id="t33" style="top:1834.08px;font-size:39.00px;font-weight:400;color:#0a0d14;letter-spacing:0.633px;left:358.80px;">NewMind AI</div>
<div class="a" style="left:936.4px;top:1829.90px;width:44.4px;height:44.4px;border-radius:50%;background:#ccd1d8"></div>
<div class="a" style="left:955.20px;top:1839.60px;width:7.00px;height:7.00px;background:#ffffff;border-radius:4px;"></div>
<div class="a" style="left:955.20px;top:1849.10px;width:7.00px;height:17.00px;background:#ffffff;border-radius:3.5px;"></div>
<div class="a" style="left:250.00px;top:1900.30px;width:759.00px;height:2.40px;background:#eef0f4;border-radius:0px;"></div>
<svg class="a" style="left:283.00px;top:1930.40px;" width="48.00" height="48.00" viewBox="0 0 48.00 48.00"><g fill="none" stroke="#454c5a" stroke-width="3.8" stroke-linejoin="round"><path d="M6 40 V9 a6 6 0 0 1 6 -6 H24 a6 6 0 0 1 6 6 V40 a3 3 0 0 1 -3 3 H9 a3 3 0 0 1 -3 -3 Z"/><path d="M30 15 H38.5 a6 6 0 0 1 6 6 V40 a3 3 0 0 1 -3 3 H30"/></g><g fill="#454c5a"><rect x="11.0" y="11.5" width="5" height="3.4" rx="1.7"/><rect x="19.0" y="11.5" width="5" height="3.4" rx="1.7"/><rect x="11.0" y="18.5" width="5" height="3.4" rx="1.7"/><rect x="19.0" y="18.5" width="5" height="3.4" rx="1.7"/><rect x="11.0" y="25.5" width="5" height="3.4" rx="1.7"/><rect x="19.0" y="25.5" width="5" height="3.4" rx="1.7"/><rect x="11.0" y="32.5" width="5" height="3.4" rx="1.7"/><rect x="19.0" y="32.5" width="5" height="3.4" rx="1.7"/><rect x="35.5" y="21.0" width="3.4" height="3.4" rx="1.7"/><rect x="35.5" y="28.0" width="3.4" height="3.4" rx="1.7"/><rect x="35.5" y="35.0" width="3.4" height="3.4" rx="1.7"/></g></svg>
<div class="t" id="t34" style="top:1935.38px;font-size:39.00px;font-weight:400;color:#0a0d14;letter-spacing:0.633px;left:358.80px;">NewMind AI</div>
<div class="a" style="left:936.4px;top:1931.20px;width:44.4px;height:44.4px;border-radius:50%;background:#ccd1d8"></div>
<div class="a" style="left:955.20px;top:1940.90px;width:7.00px;height:7.00px;background:#ffffff;border-radius:4px;"></div>
<div class="a" style="left:955.20px;top:1950.40px;width:7.00px;height:17.00px;background:#ffffff;border-radius:3.5px;"></div>
<div class="a" style="left:250.00px;top:2001.60px;width:759.00px;height:2.40px;background:#eef0f4;border-radius:0px;"></div>
<svg class="a" style="left:283.00px;top:2031.70px;" width="48.00" height="48.00" viewBox="0 0 48.00 48.00"><g fill="none" stroke="#454c5a" stroke-width="3.8" stroke-linejoin="round"><path d="M6 40 V9 a6 6 0 0 1 6 -6 H24 a6 6 0 0 1 6 6 V40 a3 3 0 0 1 -3 3 H9 a3 3 0 0 1 -3 -3 Z"/><path d="M30 15 H38.5 a6 6 0 0 1 6 6 V40 a3 3 0 0 1 -3 3 H30"/></g><g fill="#454c5a"><rect x="11.0" y="11.5" width="5" height="3.4" rx="1.7"/><rect x="19.0" y="11.5" width="5" height="3.4" rx="1.7"/><rect x="11.0" y="18.5" width="5" height="3.4" rx="1.7"/><rect x="19.0" y="18.5" width="5" height="3.4" rx="1.7"/><rect x="11.0" y="25.5" width="5" height="3.4" rx="1.7"/><rect x="19.0" y="25.5" width="5" height="3.4" rx="1.7"/><rect x="11.0" y="32.5" width="5" height="3.4" rx="1.7"/><rect x="19.0" y="32.5" width="5" height="3.4" rx="1.7"/><rect x="35.5" y="21.0" width="3.4" height="3.4" rx="1.7"/><rect x="35.5" y="28.0" width="3.4" height="3.4" rx="1.7"/><rect x="35.5" y="35.0" width="3.4" height="3.4" rx="1.7"/></g></svg>
<div class="t" id="t35" style="top:2036.68px;font-size:39.00px;font-weight:400;color:#0a0d14;letter-spacing:0.633px;left:358.80px;">NewMind AI</div>
<div class="a" style="left:936.4px;top:2032.50px;width:44.4px;height:44.4px;border-radius:50%;background:#ccd1d8"></div>
<div class="a" style="left:955.20px;top:2042.20px;width:7.00px;height:7.00px;background:#ffffff;border-radius:4px;"></div>
<div class="a" style="left:955.20px;top:2051.70px;width:7.00px;height:17.00px;background:#ffffff;border-radius:3.5px;"></div>
<div class="a" style="left:250.00px;top:2102.90px;width:759.00px;height:2.40px;background:#eef0f4;border-radius:0px;"></div>
<svg class="a" style="left:283.00px;top:2133.00px;" width="48.00" height="48.00" viewBox="0 0 48.00 48.00"><g fill="none" stroke="#454c5a" stroke-width="3.8" stroke-linejoin="round"><path d="M6 40 V9 a6 6 0 0 1 6 -6 H24 a6 6 0 0 1 6 6 V40 a3 3 0 0 1 -3 3 H9 a3 3 0 0 1 -3 -3 Z"/><path d="M30 15 H38.5 a6 6 0 0 1 6 6 V40 a3 3 0 0 1 -3 3 H30"/></g><g fill="#454c5a"><rect x="11.0" y="11.5" width="5" height="3.4" rx="1.7"/><rect x="19.0" y="11.5" width="5" height="3.4" rx="1.7"/><rect x="11.0" y="18.5" width="5" height="3.4" rx="1.7"/><rect x="19.0" y="18.5" width="5" height="3.4" rx="1.7"/><rect x="11.0" y="25.5" width="5" height="3.4" rx="1.7"/><rect x="19.0" y="25.5" width="5" height="3.4" rx="1.7"/><rect x="11.0" y="32.5" width="5" height="3.4" rx="1.7"/><rect x="19.0" y="32.5" width="5" height="3.4" rx="1.7"/><rect x="35.5" y="21.0" width="3.4" height="3.4" rx="1.7"/><rect x="35.5" y="28.0" width="3.4" height="3.4" rx="1.7"/><rect x="35.5" y="35.0" width="3.4" height="3.4" rx="1.7"/></g></svg>
<div class="t" id="t36" style="top:2137.98px;font-size:39.00px;font-weight:400;color:#0a0d14;letter-spacing:0.633px;left:358.80px;">NewMind AI</div>
<div class="a" style="left:936.4px;top:2133.80px;width:44.4px;height:44.4px;border-radius:50%;background:#ccd1d8"></div>
<div class="a" style="left:955.20px;top:2143.50px;width:7.00px;height:7.00px;background:#ffffff;border-radius:4px;"></div>
<div class="a" style="left:955.20px;top:2153.00px;width:7.00px;height:17.00px;background:#ffffff;border-radius:3.5px;"></div>
<div class="a" style="left:250.00px;top:2204.20px;width:759.00px;height:2.40px;background:#eef0f4;border-radius:0px;"></div>
<div class="a" style="left:1023.50px;top:509.00px;width:16.50px;height:348.00px;background:#eef0f3;border-radius:8.25px;"></div>
<div class="a" style="left:1052.00px;top:0.00px;width:2788.00px;height:2159.00px;background:#f0f4f9;border-radius:0px;"></div>
<div class="a" style="left:1052px;top:222px;width:40px;height:1937px;background:linear-gradient(90deg,rgba(20,40,60,0.05),rgba(20,40,60,0))"></div>
<div class="a" style="left:1051.20px;top:222.00px;width:1.80px;height:1937.00px;background:#d6e2e0;border-radius:0px;"></div>
<div class="a" style="left:1108.00px;top:62.00px;width:1424.00px;height:98.00px;background:#ffffff;border-radius:20px;"></div>
<svg class="a" style="left:1138.00px;top:84.00px;" width="56.00" height="56.00" viewBox="0 0 56.00 56.00"><g fill="none" stroke="#8592a5" stroke-width="4.2" stroke-linecap="round"><circle cx="22.5" cy="24.5" r="17"/><line x1="35" y1="37" x2="46" y2="48"/></g></svg>
<div class="t" id="t37" style="top:94.12px;font-size:35.00px;font-weight:400;color:#9ba6b6;letter-spacing:-1.216px;left:1203.00px;">Tüm görevlerin ve kullanıcıların adına göre arama yapın</div>
<div class="a" style="left:2780.50px;top:42.50px;width:1003.50px;height:108.50px;background:#0a2637;border-radius:20px;"></div>
<div class="t" id="t38" style="top:78.63px;font-size:40.00px;font-weight:400;color:#ffffff;letter-spacing:-1.147px;left:2830.00px;">Mail Tablosu Toplantısı... 1/5</div>
<svg class="a" style="left:3330.00px;top:82.00px;" width="36.00" height="30.00" viewBox="0 0 36.00 30.00"><polyline points="8,9 16.5,17.5 25,9" fill="none" stroke="#ffffff" stroke-width="5" stroke-linecap="round" stroke-linejoin="round"/></svg>
<div class="a" style="left:3385.80px;top:66.00px;width:2.60px;height:63.50px;background:#8b95a1;border-radius:1.3px;"></div>
<div class="a" style="left:3460.50px;top:82.00px;width:5.80px;height:33.00px;background:#ffffff;border-radius:3px;"></div>
<div class="a" style="left:3477.20px;top:82.00px;width:5.80px;height:33.00px;background:#ffffff;border-radius:3px;"></div>
<div class="a" style="left:3526.00px;top:66px;width:60px;height:60px;border-radius:50%;box-sizing:border-box;border:2.2px solid #8893a3"></div>
<div class="t" id="t39" style="top:80.75px;font-size:31.00px;font-weight:400;color:#8893a3;left:3056.00px;width:1000px;text-align:center;letter-spacing:1px;">00</div>
<div class="a" style="left:3610.30px;top:66px;width:60px;height:60px;border-radius:50%;box-sizing:border-box;border:2.2px solid #8893a3"></div>
<div class="t" id="t40" style="top:80.75px;font-size:31.00px;font-weight:400;color:#8893a3;left:3140.30px;width:1000px;text-align:center;letter-spacing:1px;">00</div>
<svg class="a" style="left:3689.00px;top:60.00px;" width="72.00" height="72.00" viewBox="0 0 72.00 72.00"><circle cx="36" cy="36" r="30.5" fill="none" stroke="#2f4e33" stroke-width="6"/><path d="M36 5.5 A30.5 30.5 0 0 1 36 66.5" fill="none" stroke="#9be51c" stroke-width="6.5"/></svg>
<div class="t" id="t41" style="top:81.25px;font-size:31.00px;font-weight:400;color:#a3ee2c;left:3224.50px;width:1000px;text-align:center;letter-spacing:1px;">30</div>
<div class="a" style="left:1052.00px;top:221.50px;width:2788.00px;height:2.50px;background:#dae4e3;border-radius:0px;"></div>
<div class="a" style="left:1052.00px;top:350.50px;width:2788.00px;height:2.50px;background:#dae4e3;border-radius:0px;"></div>
<div class="a" style="left:1109px;top:240.5px;width:419px;height:95.5px;border-radius:16px;box-sizing:border-box;border:2px solid #e6edf6"></div>
<div class="a" style="left:1431.00px;top:242.00px;width:2.00px;height:92.00px;background:#e6edf6;border-radius:0px;"></div>
<svg class="a" style="left:1130.00px;top:265.00px;" width="54.00" height="46.00" viewBox="0 0 54.00 46.00"><g fill="none" stroke="#0a0d14" stroke-width="4.4" stroke-linejoin="round" stroke-linecap="round"><path d="M8 8.5 L14 30 H42 L48 8.5 L37.5 20 L28 7.5 L18.5 20 Z"/><line x1="14" y1="37.5" x2="42" y2="37.5"/></g></svg>
<div class="t" id="t42" style="top:268.83px;font-size:38.00px;font-weight:700;color:#0c1e2c;letter-spacing:-1.673px;left:1192.80px;">Ana Görev</div>
<svg class="a" style="left:1464.00px;top:274.50px;" width="32.00" height="30.00" viewBox="0 0 32.00 30.00"><polyline points="4.5,8.5 15.5,19.5 26.5,8.5" fill="none" stroke="#0a0d14" stroke-width="5.5" stroke-linecap="round" stroke-linejoin="round"/></svg>
<svg class="a" style="left:1600.00px;top:266.00px;" width="56.00" height="46.00" viewBox="0 0 56.00 46.00"><g fill="none" stroke="#7a879a" stroke-width="3.8" stroke-linecap="round"><rect x="8.7" y="8" width="12" height="12" rx="2"/><rect x="8.7" y="26.5" width="12" height="12" rx="2"/><line x1="27" y1="9.5" x2="48" y2="9.5"/><line x1="27" y1="16" x2="40" y2="16"/><line x1="27" y1="29.5" x2="48" y2="29.5"/><line x1="27" y1="36.5" x2="40" y2="36.5"/></g></svg>
<div class="t" id="t43" style="top:269.83px;font-size:40.00px;font-weight:400;color:#7a879a;letter-spacing:-1.560px;left:1670.50px;">Ana Liste</div>
<svg class="a" style="left:1882.00px;top:264.00px;" width="50.00" height="50.00" viewBox="0 0 50.00 50.00"><g fill="none" stroke="#7a879a" stroke-width="4" stroke-linecap="round"><rect x="10" y="8" width="36" height="35" rx="7"/><line x1="18" y1="18" x2="31" y2="18"/><line x1="18" y1="25.5" x2="36" y2="25.5"/><line x1="18" y1="33" x2="26" y2="33"/></g></svg>
<div class="t" id="t44" style="top:269.83px;font-size:40.00px;font-weight:400;color:#7a879a;letter-spacing:-1.135px;left:1951.00px;">Gant Tablosu</div>
<svg class="a" style="left:2195.00px;top:264.00px;" width="56.00" height="50.00" viewBox="0 0 56.00 50.00"><g fill="none" stroke="#7a879a" stroke-width="4.2" stroke-linejoin="round"><rect x="8.6" y="9" width="16" height="32" rx="1.5"/><rect x="31.6" y="9" width="16" height="22" rx="1.5"/></g></svg>
<div class="t" id="t45" style="top:269.83px;font-size:40.00px;font-weight:400;color:#7a879a;letter-spacing:-1.383px;left:2267.00px;">Kanban</div>
<svg class="a" style="left:2430.00px;top:266.00px;" width="50.00" height="50.00" viewBox="0 0 50.00 50.00"><g fill="none" stroke="#0a0d14" stroke-width="4.6" stroke-linecap="square"><polyline points="6.5,14 6.5,6.5 14,6.5"/><polyline points="35,6.5 42.5,6.5 42.5,14"/><polyline points="6.5,35 6.5,42.5 14,42.5"/><polyline points="35,42.5 42.5,42.5 42.5,35"/></g><path d="M24.5 13 L35.5 19.5 V31.5 L24.5 38 L13.5 31.5 V19.5 Z" fill="#0a0d14"/><path d="M24.5 19 L29.5 22 L24.5 25 L19.5 22 Z M18.5 24.5 L23 27 V32.5 L18.5 30 Z M30.5 24.5 V30 L26 32.5 V27 Z" fill="#ffffff"/></svg>
<div class="t" id="t46" style="top:269.83px;font-size:40.00px;font-weight:700;color:#0a0d14;letter-spacing:-2.242px;left:2498.00px;">Görselleştirme</div>
<div class="a" style="left:2408.00px;top:340.50px;width:368.00px;height:14.00px;background:#0a0d14;border-radius:0px;"></div>
<div class="a" style="left:2810.50px;top:245.00px;width:3.20px;height:89.00px;background:#cfe0f5;border-radius:0px;"></div>
<svg class="a" style="left:2850.00px;top:268.00px;" width="46.00" height="46.00" viewBox="0 0 46.00 46.00"><g stroke="#7a879a" stroke-width="4.6"><line x1="23" y1="6" x2="23" y2="38"/><line x1="7" y1="22" x2="39" y2="22"/></g></svg>
<div class="a" style="left:1108.00px;top:396.00px;width:304.00px;height:98.00px;background:rgba(255,255,255,0.25);border-radius:16px;"></div>
<div class="t" id="t47" style="top:428.83px;font-size:38.00px;font-weight:400;color:#0a0d14;letter-spacing:-1.018px;left:1141.00px;-webkit-text-stroke:0.5px #0a0d14;">125 Görev</div>
<div class="a" style="left:2170.00px;top:396.00px;width:562.50px;height:99.00px;background:#ffffff;border-radius:18px;"></div>
<div class="t" id="t48" style="top:427.13px;font-size:40.00px;font-weight:400;color:#0a0d14;letter-spacing:-1.498px;left:2201.00px;-webkit-text-stroke:0.8px #0a0d14;">12.12.2022 <span style="color:#8ee000;-webkit-text-stroke:0.8px #8ee000">-</span> 12.12.2022</div>
<div class="a" style="left:2634.00px;top:414.00px;width:2.60px;height:63.50px;background:#c9dcf3;border-radius:0px;"></div>
<svg class="a" style="left:2650.00px;top:415.00px;" width="66.00" height="60.00" viewBox="0 0 66.00 60.00"><g fill="none" stroke="#0a0d14" stroke-width="3.8" stroke-linecap="round"><rect x="10.5" y="12" width="44.5" height="40" rx="8"/><line x1="21" y1="8.5" x2="21" y2="14"/><line x1="44.5" y1="8.5" x2="44.5" y2="14"/><line x1="19.5" y1="33" x2="22.5" y2="33"/><line x1="29" y1="33" x2="32" y2="33"/><line x1="40.5" y1="33" x2="45.5" y2="33"/><line x1="19.5" y1="42" x2="22.5" y2="42"/><line x1="30" y1="42" x2="33" y2="42"/></g></svg>
<div class="a" style="left:2777.50px;top:399.00px;width:460.50px;height:93.00px;background:#ffffff;border-radius:18px;box-shadow:0 1px 2px rgba(0,0,0,0.04)"></div>
<div class="a" style="left:3143.50px;top:399.00px;width:2.00px;height:93.00px;background:#eef2f6;border-radius:0px;"></div>
<div class="t" id="t49" style="top:428.83px;font-size:38.00px;font-weight:400;color:#0a0d14;letter-spacing:-0.450px;left:2809.00px;-webkit-text-stroke:0.8px #0a0d14;">Tüm Görev Durumu</div>
<svg class="a" style="left:3172.00px;top:428.00px;" width="40.00" height="36.00" viewBox="0 0 40.00 36.00"><polyline points="8.5,13 19.5,24 30.5,13" fill="none" stroke="#0a0d14" stroke-width="5.2" stroke-linecap="round" stroke-linejoin="round"/></svg>
<div class="a" style="left:3284.00px;top:396.00px;width:97.00px;height:98.50px;background:#ffffff;border-radius:18px;"></div>
<svg class="a" style="left:3300.00px;top:416.00px;" width="66.00" height="60.00" viewBox="0 0 66.00 60.00"><path d="M12.5 12 H53.5 a3 3 0 0 1 2.2 5 L39.5 34 V47.5 L31 53.5 V34 L14.3 17 a3 3 0 0 1 -1.8 -5 Z" fill="none" stroke="#0a0d14" stroke-width="4.2" stroke-linejoin="round"/></svg>
<div class="a" style="left:3424.00px;top:396.00px;width:360.00px;height:98.50px;background:#0a2637;border-radius:18px;box-shadow:0 14px 28px rgba(10,38,55,0.10)"></div>
<svg class="a" style="left:3470.00px;top:424.00px;" width="46.00" height="46.00" viewBox="0 0 46.00 46.00"><g stroke="#ffffff" stroke-width="6.5"><line x1="23.5" y1="5.5" x2="23.5" y2="41"/><line x1="5.5" y1="23" x2="41" y2="23"/></g></svg>
<div class="t" id="t50" style="top:427.13px;font-size:40.00px;font-weight:700;color:#ffffff;letter-spacing:-2.955px;left:3531.00px;">Yeni Oluştur</div>
<div class="a" style="left:1052.00px;top:537.00px;width:2788.00px;height:2.50px;background:#dae4e3;border-radius:0px;"></div>
<div class="a" style="left:1108.00px;top:596.00px;width:506.00px;height:224.50px;background:#ffffff;border-radius:14px;box-shadow:0 10px 30px rgba(30,50,80,0.04)"></div>
<div class="t" id="t51" style="top:656.66px;font-size:65.00px;font-weight:700;color:#0a0d14;left:1164.00px;letter-spacing:-1.5px;"><span style="margin:0 -4px">1</span>34</div>
<div class="t" id="t52" style="top:684.01px;font-size:32.70px;font-weight:400;color:#0a0d14;letter-spacing:2.547px;left:1270.00px;-webkit-text-stroke:0.6px #0a0d14;">/3423</div>
<div class="t" id="t53" style="top:729.23px;font-size:38.70px;font-weight:400;color:#00b85c;letter-spacing:1.277px;left:1164.00px;">Tamamlanan</div>
<svg class="a" style="left:1448.00px;top:660.70px;" width="104.00" height="104.00" viewBox="0 0 104.00 104.00"><g fill="none" stroke="#aee8cf" stroke-width="5.2"><polyline points="2.6,33.7 2.6,2.6 33.7,2.6"/><polyline points="70.3,2.6 101.4,2.6 101.4,33.7"/><polyline points="2.6,70.3 2.6,101.4 33.7,101.4"/><polyline points="70.3,101.4 101.4,101.4 101.4,70.3"/></g><circle cx="52" cy="52" r="18.2" fill="#00b85c"/></svg>
<div class="a" style="left:1650.10px;top:596.00px;width:506.00px;height:224.50px;background:#ffffff;border-radius:14px;box-shadow:0 10px 30px rgba(30,50,80,0.04)"></div>
<div class="t" id="t54" style="top:656.66px;font-size:65.00px;font-weight:700;color:#0a0d14;left:1706.10px;letter-spacing:-1.5px;"><span style="margin:0 -4px">1</span>2<span style="margin:0 -4px">1</span></div>
<div class="t" id="t55" style="top:684.01px;font-size:32.70px;font-weight:400;color:#0a0d14;letter-spacing:1.797px;left:1794.20px;-webkit-text-stroke:0.6px #0a0d14;">/3423</div>
<div class="t" id="t56" style="top:729.23px;font-size:38.70px;font-weight:400;color:#0a84f9;letter-spacing:1.188px;left:1706.10px;">Aktif</div>
<svg class="a" style="left:1995.80px;top:660.70px;" width="104.00" height="104.00" viewBox="0 0 104.00 104.00"><g fill="none" stroke="#bcdafb" stroke-width="5.2"><polyline points="2.6,33.7 2.6,2.6 33.7,2.6"/><polyline points="70.3,2.6 101.4,2.6 101.4,33.7"/><polyline points="2.6,70.3 2.6,101.4 33.7,101.4"/><polyline points="70.3,101.4 101.4,101.4 101.4,70.3"/></g><circle cx="52" cy="52" r="18.2" fill="#0a84f9"/></svg>
<div class="a" style="left:2192.50px;top:596.00px;width:506.00px;height:224.50px;background:#ffffff;border-radius:14px;box-shadow:0 10px 30px rgba(30,50,80,0.04)"></div>
<div class="t" id="t57" style="top:656.66px;font-size:65.00px;font-weight:700;color:#0a0d14;left:2248.50px;letter-spacing:-0.5px;">98</div>
<div class="t" id="t58" style="top:684.01px;font-size:32.70px;font-weight:400;color:#0a0d14;letter-spacing:2.422px;left:2326.00px;-webkit-text-stroke:0.6px #0a0d14;">/3423</div>
<div class="t" id="t59" style="top:729.23px;font-size:38.70px;font-weight:400;color:#6b7a8f;letter-spacing:0.978px;left:2248.50px;">Bekleyen</div>
<svg class="a" style="left:2538.10px;top:660.70px;" width="104.00" height="104.00" viewBox="0 0 104.00 104.00"><g fill="none" stroke="#d5dadf" stroke-width="5.2"><polyline points="2.6,33.7 2.6,2.6 33.7,2.6"/><polyline points="70.3,2.6 101.4,2.6 101.4,33.7"/><polyline points="2.6,70.3 2.6,101.4 33.7,101.4"/><polyline points="70.3,101.4 101.4,101.4 101.4,70.3"/></g><circle cx="52" cy="52" r="18.2" fill="#7b889a"/></svg>
<div class="a" style="left:2735.00px;top:596.00px;width:506.00px;height:224.50px;background:#ffffff;border-radius:14px;box-shadow:0 10px 30px rgba(30,50,80,0.04)"></div>
<div class="t" id="t60" style="top:656.66px;font-size:65.00px;font-weight:700;color:#0a0d14;left:2791.00px;letter-spacing:-1.5px;"><span style="margin:0 -4px">1</span>2</div>
<div class="t" id="t61" style="top:684.01px;font-size:32.70px;font-weight:400;color:#0a0d14;letter-spacing:2.422px;left:2856.00px;-webkit-text-stroke:0.6px #0a0d14;">/3423</div>
<div class="t" id="t62" style="top:729.23px;font-size:38.70px;font-weight:400;color:#f5b325;letter-spacing:1.614px;left:2791.00px;">Planlanan</div>
<svg class="a" style="left:3081.00px;top:660.70px;" width="104.00" height="104.00" viewBox="0 0 104.00 104.00"><g fill="none" stroke="#fde8bf" stroke-width="5.2"><polyline points="2.6,33.7 2.6,2.6 33.7,2.6"/><polyline points="70.3,2.6 101.4,2.6 101.4,33.7"/><polyline points="2.6,70.3 2.6,101.4 33.7,101.4"/><polyline points="70.3,101.4 101.4,101.4 101.4,70.3"/></g><circle cx="52" cy="52" r="18.2" fill="#fbb42a"/></svg>
<div class="a" style="left:3277.70px;top:596.00px;width:506.00px;height:224.50px;background:#ffffff;border-radius:14px;box-shadow:0 10px 30px rgba(30,50,80,0.04)"></div>
<div class="t" id="t63" style="top:652.42px;font-size:59.50px;font-weight:700;color:#0a0d14;left:3330.90px;letter-spacing:0.0px;">5</div>
<div class="t" id="t64" style="top:679.69px;font-size:27.30px;font-weight:400;color:#0a0d14;letter-spacing:1.547px;left:3366.30px;-webkit-text-stroke:0.6px #0a0d14;">/3423</div>
<div class="t" id="t65" style="top:726.69px;font-size:34.50px;font-weight:400;color:#f5594a;letter-spacing:1.362px;left:3330.90px;">Süresi Geçen</div>
<svg class="a" style="left:3623.60px;top:660.70px;" width="104.00" height="104.00" viewBox="0 0 104.00 104.00"><g fill="none" stroke="#fdd3cf" stroke-width="5.2"><polyline points="2.6,33.7 2.6,2.6 33.7,2.6"/><polyline points="70.3,2.6 101.4,2.6 101.4,33.7"/><polyline points="2.6,70.3 2.6,101.4 33.7,101.4"/><polyline points="70.3,101.4 101.4,101.4 101.4,70.3"/></g><circle cx="52" cy="52" r="18.2" fill="#fc6150"/></svg>
<div class="a" style="left:1108.00px;top:877.00px;width:1048.00px;height:776.00px;background:#ffffff;border-radius:16px;"></div>
<div class="t" id="t66" style="top:937.36px;font-size:48.00px;font-weight:700;color:#0a0d14;letter-spacing:-0.610px;left:1164.00px;">Toplam Kapasite</div>
<div class="t" id="t67" style="top:993.37px;font-size:35.00px;font-weight:400;color:#0a0d14;letter-spacing:1.909px;left:1164.00px;"><span style="-webkit-text-stroke:0.7px #0a0d14">50 sa</span><span style="color:#6b7d94;font-weight:400">/haftalık</span></div>
<svg class="a" style="left:1341.00px;top:1139.50px;" width="600.00" height="240.00" viewBox="0 0 600.00 240.00"><path d="M30 8.5 H508 a21.5 21.5 0 0 1 21.5 21.5 V55 H551 a22 22 0 0 1 22 22 V150 a22 22 0 0 1 -22 22 H529.5 V197.5 a21.5 21.5 0 0 1 -21.5 21.5 H30 a21.5 21.5 0 0 1 -21.5 -21.5 V30 a21.5 21.5 0 0 1 21.5 -21.5 Z" fill="#ffffff" stroke="#5a6678" stroke-width="17"/><path d="M30 17 H239 V211 H30 a13.5 13.5 0 0 1 -13.5 -13.5 V30.5 a13.5 13.5 0 0 1 13.5 -13.5 Z" fill="#0084f9"/><rect x="239" y="17" width="154" height="194" fill="#fcd04f"/></svg>
<div class="t" id="t68" style="top:1238.31px;font-size:32.70px;font-weight:400;color:#ffffff;letter-spacing:1.177px;left:963.59px;width:1000px;text-align:center;">20 saat</div>
<div class="t" id="t69" style="top:1238.31px;font-size:32.70px;font-weight:400;color:#ffffff;letter-spacing:-0.454px;left:1148.27px;width:1000px;text-align:center;">15 saat</div>
<div class="t" id="t70" style="top:1238.31px;font-size:32.70px;font-weight:400;color:#5a6678;letter-spacing:-0.373px;left:1308.31px;width:1000px;text-align:center;">15 saat</div>
<svg class="a" style="left:1350.00px;top:1370.00px;" width="40.00" height="34.00" viewBox="0 0 40.00 34.00"><path d="M9 6 H34 a2 2 0 0 1 1.6 3.2 L23.6 24.8 a2 2 0 0 1 -3.2 0 L7.4 9.2 A2 2 0 0 1 9 6 Z" fill="#3b73f5"/></svg>
<svg class="a" style="left:1575.00px;top:1370.00px;" width="40.00" height="34.00" viewBox="0 0 40.00 34.00"><path d="M9 6 H34 a2 2 0 0 1 1.6 3.2 L23.6 24.8 a2 2 0 0 1 -3.2 0 L7.4 9.2 A2 2 0 0 1 9 6 Z" fill="#fcc94a"/></svg>
<svg class="a" style="left:1772.00px;top:1370.00px;" width="40.00" height="34.00" viewBox="0 0 40.00 34.00"><path d="M10 7.5 H33 L21.5 23.5 Z" fill="none" stroke="#5a6678" stroke-width="3" stroke-linejoin="round"/></svg>
<div class="t" id="t71" style="top:1419.37px;font-size:35.00px;font-weight:700;color:#0a0d14;letter-spacing:1.048px;left:1356.00px;">20 saat</div>
<div class="t" id="t72" style="top:1460.18px;font-size:30.50px;font-weight:400;color:#0a0d14;letter-spacing:0.451px;left:1356.00px;">Devam eden</div>
<div class="t" id="t73" style="top:1419.37px;font-size:35.00px;font-weight:700;color:#0a0d14;letter-spacing:-0.454px;left:1580.00px;">15 saat</div>
<div class="t" id="t74" style="top:1460.18px;font-size:30.50px;font-weight:400;color:#0a0d14;letter-spacing:0.603px;left:1580.00px;">Planlanan</div>
<div class="t" id="t75" style="top:1419.37px;font-size:35.00px;font-weight:700;color:#0a0d14;letter-spacing:-0.454px;left:1776.00px;">15 saat</div>
<div class="t" id="t76" style="top:1460.18px;font-size:30.50px;font-weight:400;color:#0a0d14;letter-spacing:0.958px;left:1776.00px;">Uygun</div>
<div class="a" style="left:2193.00px;top:877.00px;width:1591.00px;height:776.00px;background:#ffffff;border-radius:16px;"></div>
<div class="t" id="t77" style="top:937.36px;font-size:48.00px;font-weight:700;color:#0a0d14;letter-spacing:-0.248px;left:2250.00px;">Zaman Girişleri</div>
<div class="t" id="t78" style="top:993.37px;font-size:35.00px;font-weight:400;color:#0a0d14;letter-spacing:1.660px;left:2250.00px;"><span style="-webkit-text-stroke:0.7px #0a0d14">350 sa</span><span style="color:#6b7d94;font-weight:400">/Aylık</span></div>
<div class="t" id="t79" style="top:951.37px;font-size:35.00px;font-weight:400;color:#0a0d14;letter-spacing:1.297px;right:111.00px;text-align:right;"><b>23</b><span style="color:#5a6678">/31 Mart</span></div>
<svg class="a" style="left:2304.50px;top:1108.30px;" width="420.00" height="420.00" viewBox="0 0 420.00 420.00"><circle cx="210" cy="210" r="166.75" fill="none" stroke="#e5eaf4" stroke-width="56.5"/><path d="M210 42.7 A167.3 167.3 0 1 1 42.7 210" fill="none" stroke="#67717f" stroke-width="36"/><line x1="210" y1="10" x2="210" y2="75" stroke="#67717f" stroke-width="11.6" stroke-linecap="round"/></svg>
<div class="t" id="t80" style="top:1263.37px;font-size:52.00px;font-weight:700;color:#0a0d14;left:2012.00px;width:1000px;text-align:center;">276</div>
<div class="t" id="t81" style="top:1321.69px;font-size:26.00px;font-weight:700;color:#5a6678;left:2012.00px;width:1000px;text-align:center;">Toplam</div>
<div class="t" id="t82" style="top:1347.19px;font-size:26.00px;font-weight:700;color:#5a6678;left:2012.00px;width:1000px;text-align:center;">Harcanan Zaman</div>
<svg class="a" style="left:2776.20px;top:1108.30px;" width="420.00" height="420.00" viewBox="0 0 420.00 420.00"><circle cx="210" cy="210" r="166.75" fill="none" stroke="#e5eaf4" stroke-width="56.5"/><path d="M210 42.7 A167.3 167.3 0 1 1 42.7 210" fill="none" stroke="#3ee240" stroke-width="36"/><line x1="210" y1="10" x2="210" y2="75" stroke="#3ee240" stroke-width="11.6" stroke-linecap="round"/></svg>
<div class="t" id="t83" style="top:1263.37px;font-size:52.00px;font-weight:700;color:#0a0d14;left:2483.20px;width:1000px;text-align:center;">74</div>
<div class="t" id="t84" style="top:1321.69px;font-size:26.00px;font-weight:700;color:#5a6678;left:2483.20px;width:1000px;text-align:center;">Toplam</div>
<div class="t" id="t85" style="top:1347.19px;font-size:26.00px;font-weight:700;color:#5a6678;left:2483.20px;width:1000px;text-align:center;">Kalan Süre</div>
<svg class="a" style="left:3246.00px;top:1108.30px;" width="420.00" height="420.00" viewBox="0 0 420.00 420.00"><circle cx="210" cy="210" r="166.75" fill="none" stroke="#e5eaf4" stroke-width="56.5"/><path d="M210 42.7 A167.3 167.3 0 1 1 42.7 210" fill="none" stroke="#e04ed6" stroke-width="36"/><line x1="210" y1="10" x2="210" y2="75" stroke="#e04ed6" stroke-width="11.6" stroke-linecap="round"/></svg>
<div class="t" id="t86" style="top:1263.37px;font-size:52.00px;font-weight:700;color:#0a0d14;left:2949.00px;width:1000px;text-align:center;">145</div>
<div class="t" id="t87" style="top:1321.69px;font-size:26.00px;font-weight:700;color:#5a6678;left:2949.00px;width:1000px;text-align:center;">Faturalandırılma</div>
<div class="t" id="t88" style="top:1347.19px;font-size:26.00px;font-weight:700;color:#5a6678;left:2952.00px;width:1000px;text-align:center;">Zamanı</div>
<div class="a" style="left:1108.00px;top:1695.60px;width:1048.00px;height:600.00px;background:#ffffff;border-radius:16px;"></div>
<div class="t" id="t89" style="top:1756.63px;font-size:46.50px;font-weight:700;color:#0a0d14;letter-spacing:-0.149px;left:1164.60px;">Toplam Durum</div>
<div class="t" id="t90" style="top:1818.32px;font-size:33.40px;font-weight:400;color:#6b7d94;letter-spacing:3.208px;left:1164.60px;">Mart 2023</div>
<svg class="a" style="left:1362.00px;top:1812.50px;" width="540.00" height="540.00" viewBox="0 0 540.00 540.00"><path d="M342.93 10.55 A269.50 269.50 0 0 1 362.17 523.25 L330.71 436.80 A177.50 177.50 0 0 0 318.03 99.12 Z" fill="#02cb72" stroke="#ffffff" stroke-width="2"/><path d="M177.83 523.25 A269.50 269.50 0 0 1 0.87 284.10 L92.74 279.29 A177.50 177.50 0 0 0 209.29 436.80 Z" fill="#7e8a9c" stroke="#ffffff" stroke-width="2"/><path d="M0.87 284.10 A269.50 269.50 0 0 1 342.93 10.55 L318.03 99.12 A177.50 177.50 0 0 0 92.74 279.29 Z" fill="#007ff5" stroke="#ffffff" stroke-width="2"/></svg>
<div class="a" style="left:1808px;top:1830px;width:305px;height:84px;border-radius:10px;background:#ffffff;box-shadow:0 30px 50px rgba(30,40,60,0.10)"></div>
<div class="a" style="left:1825px;top:1864.6px;width:16px;height:16px;border-radius:50%;background:#0aa85a"></div>
<div class="t" id="t91" style="top:1858.18px;font-size:30.50px;font-weight:400;color:#0a0d14;letter-spacing:-0.511px;left:1856.50px;">Tamamlanan:</div>
<div class="t" id="t92" style="top:1858.18px;font-size:30.50px;font-weight:700;color:#0a0d14;letter-spacing:-2.500px;left:2047.00px;">134</div>
<div class="a" style="left:2193.00px;top:1695.60px;width:1591.00px;height:600.00px;background:#ffffff;border-radius:16px;"></div>
<div class="t" id="t93" style="top:1756.63px;font-size:46.50px;font-weight:700;color:#0a0d14;letter-spacing:0.074px;left:2249.70px;">Takım Görevi</div>
<div class="t" id="t94" style="top:1818.32px;font-size:33.40px;font-weight:400;color:#6b7d94;letter-spacing:2.196px;left:2249.70px;">Mavi Takım</div>
<div class="t" id="t95" style="top:1886.13px;font-size:27.60px;font-weight:400;color:#0a0d14;letter-spacing:-1.600px;right:1524.00px;text-align:right;">150</div>
<div class="t" id="t96" style="top:2034.63px;font-size:27.60px;font-weight:400;color:#0a0d14;letter-spacing:-1.027px;right:1522.53px;text-align:right;">100</div>
<div class="a" style="left:2340.00px;top:1896.50px;width:1385.00px;height:2.40px;background:#e3e9f2;border-radius:0px;"></div>
<div class="a" style="left:2340.00px;top:2045.00px;width:1385.00px;height:2.40px;background:#e3e9f2;border-radius:0px;"></div>
<div class="a" style="left:2516.00px;top:2108.00px;width:82.00px;height:51.00px;background:#e2ecf8;border-radius:0px;"></div>
<svg class="a" style="left:2523.00px;top:2027.00px;" width="68.00" height="68.00" viewBox="0 0 68.00 68.00"><defs><clipPath id="c2557"><circle cx="34" cy="34" r="30"/></clipPath></defs><circle cx="34" cy="34" r="32.5" fill="#e1eaf7"/><circle cx="34" cy="34" r="30" fill="#ededee"/><g clip-path="url(#c2557)"><path d="M4 68 C6 50 16 45 34 44 C52 45 62 50 64 68 Z" fill="#1e2124"/><path d="M29 43 L34 58 L39 43 Z" fill="#e2e2e2"/><path d="M32.5 46 L34 58 L35.5 46 Z" fill="#555"/><ellipse cx="34" cy="27.5" rx="10.5" ry="13" fill="#cfcfcf"/><path d="M23 26 C21 13 29 9 34 9 C41 9 47 13 45 26 C44 19 39 16 34 16 C29 16 24 19 23 26 Z" fill="#26282b"/></g></svg>
<div class="a" style="left:2704.00px;top:2136.00px;width:82.00px;height:23.00px;background:#e2ecf8;border-radius:0px;"></div>
<svg class="a" style="left:2711.00px;top:2055.00px;" width="68.00" height="68.00" viewBox="0 0 68.00 68.00"><defs><clipPath id="c2745"><circle cx="34" cy="34" r="30"/></clipPath></defs><circle cx="34" cy="34" r="32.5" fill="#e1eaf7"/><circle cx="34" cy="34" r="30" fill="#ededee"/><g clip-path="url(#c2745)"><path d="M4 68 C6 50 16 45 34 44 C52 45 62 50 64 68 Z" fill="#1e2124"/><path d="M29 43 L34 58 L39 43 Z" fill="#e2e2e2"/><path d="M32.5 46 L34 58 L35.5 46 Z" fill="#555"/><ellipse cx="34" cy="27.5" rx="10.5" ry="13" fill="#cfcfcf"/><path d="M23 26 C21 13 29 9 34 9 C41 9 47 13 45 26 C44 19 39 16 34 16 C29 16 24 19 23 26 Z" fill="#26282b"/></g></svg>
<div class="a" style="left:2892.50px;top:2181.00px;width:82.00px;height:-22.00px;background:#e2ecf8;border-radius:0px;"></div>
<svg class="a" style="left:2899.50px;top:2100.00px;" width="68.00" height="68.00" viewBox="0 0 68.00 68.00"><defs><clipPath id="c2933"><circle cx="34" cy="34" r="30"/></clipPath></defs><circle cx="34" cy="34" r="32.5" fill="#e1eaf7"/><circle cx="34" cy="34" r="30" fill="#ededee"/><g clip-path="url(#c2933)"><path d="M4 68 C6 50 16 45 34 44 C52 45 62 50 64 68 Z" fill="#1e2124"/><path d="M29 43 L34 58 L39 43 Z" fill="#e2e2e2"/><path d="M32.5 46 L34 58 L35.5 46 Z" fill="#555"/><ellipse cx="34" cy="27.5" rx="10.5" ry="13" fill="#cfcfcf"/><path d="M23 26 C21 13 29 9 34 9 C41 9 47 13 45 26 C44 19 39 16 34 16 C29 16 24 19 23 26 Z" fill="#26282b"/></g></svg>
<div class="a" style="left:3080.80px;top:1973.50px;width:82.00px;height:185.50px;background:#e2ecf8;border-radius:0px;"></div>
<div class="a" style="left:3080.80px;top:2119.50px;width:82.00px;height:39.50px;background:#4192fb;border-radius:0px;"></div>
<svg class="a" style="left:3087.80px;top:1892.50px;" width="68.00" height="68.00" viewBox="0 0 68.00 68.00"><defs><clipPath id="c3121"><circle cx="34" cy="34" r="30"/></clipPath></defs><circle cx="34" cy="34" r="32.5" fill="#e1eaf7"/><circle cx="34" cy="34" r="30" fill="#ededee"/><g clip-path="url(#c3121)"><path d="M4 68 C6 50 16 45 34 44 C52 45 62 50 64 68 Z" fill="#1e2124"/><path d="M29 43 L34 58 L39 43 Z" fill="#e2e2e2"/><path d="M32.5 46 L34 58 L35.5 46 Z" fill="#555"/><ellipse cx="34" cy="27.5" rx="10.5" ry="13" fill="#cfcfcf"/><path d="M23 26 C21 13 29 9 34 9 C41 9 47 13 45 26 C44 19 39 16 34 16 C29 16 24 19 23 26 Z" fill="#26282b"/></g></svg>
<div class="a" style="left:3270.00px;top:2069.20px;width:82.00px;height:89.80px;background:#e2ecf8;border-radius:0px;"></div>
<div class="a" style="left:3270.00px;top:2116.60px;width:82.00px;height:42.40px;background:#4192fb;border-radius:0px;"></div>
<svg class="a" style="left:3277.00px;top:1988.20px;" width="68.00" height="68.00" viewBox="0 0 68.00 68.00"><defs><clipPath id="c3311"><circle cx="34" cy="34" r="30"/></clipPath></defs><circle cx="34" cy="34" r="32.5" fill="#e1eaf7"/><circle cx="34" cy="34" r="30" fill="#ededee"/><g clip-path="url(#c3311)"><path d="M4 68 C6 50 16 45 34 44 C52 45 62 50 64 68 Z" fill="#1e2124"/><path d="M29 43 L34 58 L39 43 Z" fill="#e2e2e2"/><path d="M32.5 46 L34 58 L35.5 46 Z" fill="#555"/><ellipse cx="34" cy="27.5" rx="10.5" ry="13" fill="#cfcfcf"/><path d="M23 26 C21 13 29 9 34 9 C41 9 47 13 45 26 C44 19 39 16 34 16 C29 16 24 19 23 26 Z" fill="#26282b"/></g></svg>
<div class="a" style="left:3459.00px;top:1897.00px;width:82.00px;height:262.00px;background:#e2ecf8;border-radius:0px;"></div>
<div class="a" style="left:3459.00px;top:1922.50px;width:82.00px;height:236.50px;background:#4192fb;border-radius:0px;"></div>
<svg class="a" style="left:3466.00px;top:1816.00px;" width="68.00" height="68.00" viewBox="0 0 68.00 68.00"><defs><clipPath id="c3500"><circle cx="34" cy="34" r="30"/></clipPath></defs><circle cx="34" cy="34" r="32.5" fill="#e1eaf7"/><circle cx="34" cy="34" r="30" fill="#ededee"/><g clip-path="url(#c3500)"><path d="M4 68 C6 50 16 45 34 44 C52 45 62 50 64 68 Z" fill="#1e2124"/><path d="M29 43 L34 58 L39 43 Z" fill="#e2e2e2"/><path d="M32.5 46 L34 58 L35.5 46 Z" fill="#555"/><ellipse cx="34" cy="27.5" rx="10.5" ry="13" fill="#cfcfcf"/><path d="M23 26 C21 13 29 9 34 9 C41 9 47 13 45 26 C44 19 39 16 34 16 C29 16 24 19 23 26 Z" fill="#26282b"/></g></svg></body></html>
